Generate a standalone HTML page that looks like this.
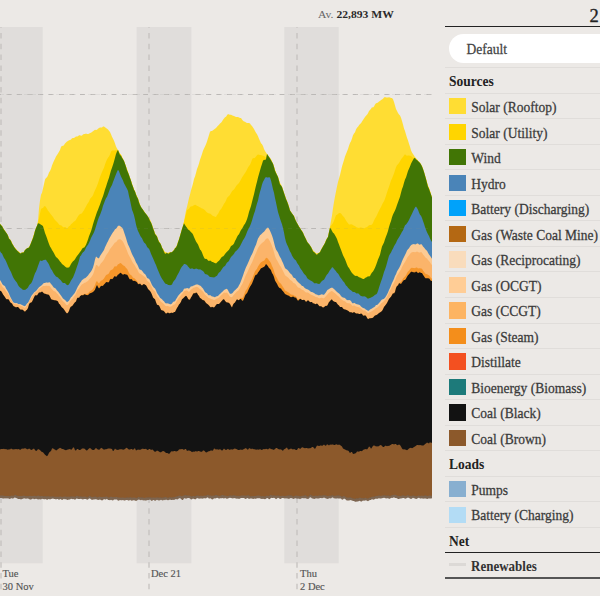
<!DOCTYPE html>
<html><head><meta charset="utf-8">
<style>
html,body{margin:0;padding:0;width:600px;height:596px;overflow:hidden;background:#ECE9E6;font-family:"Liberation Serif",serif;color:#333;}
#chart{position:absolute;left:0;top:0;width:600px;height:596px}
.xl{position:absolute;font-size:10.5px;color:#555;line-height:13.5px;white-space:nowrap;-webkit-text-stroke:0.15px #555}
#av{position:absolute;left:318px;top:8px;font-size:10px;line-height:14px;transform:scaleX(1.16);transform-origin:0 0;color:#666;white-space:nowrap}
#av b{color:#2a2a2a}
#two{position:absolute;left:589.5px;top:5px;font-size:18.5px;-webkit-text-stroke:0.3px #222;line-height:22px;color:#222}
#topline{position:absolute;left:445px;top:26px;width:155px;height:1.3px;background:#222}
#pill{position:absolute;left:449px;top:33.8px;width:170px;height:29px;border-radius:15px;background:#fff;}
#pill span{position:absolute;left:17.5px;top:7px;transform:scaleY(1.12);transform-origin:0 13.3px;font-size:13.5px;line-height:18px;color:#444;-webkit-text-stroke:0.25px #444}
.sep{position:absolute;left:445px;width:155px;height:1px;background:#E0DDDA}
.sw{position:absolute;left:449px;width:16.8px;height:16.2px}
.lt{position:absolute;left:471.3px;margin-top:6.2px;transform:scaleY(1.12);transform-origin:0 13.3px;font-size:13.5px;line-height:18px;color:#3a3a3a;white-space:nowrap;-webkit-text-stroke:0.25px #3a3a3a}
.lh{position:absolute;left:449px;margin-top:6.1px;transform:scaleY(1.12);transform-origin:0 13.3px;font-size:13.5px;line-height:18px;font-weight:bold;color:#222;white-space:nowrap}
</style></head><body>
<svg id="chart" width="600" height="596" viewBox="0 0 600 596">
<rect x="0" y="27" width="42.7" height="536.3" fill="#E0DDDB"/>
<rect x="136.6" y="27" width="54.8" height="536.3" fill="#E0DDDB"/>
<rect x="284.3" y="27" width="54.4" height="536.3" fill="#E0DDDB"/>
<g stroke="#C2BFBC" stroke-width="1.2" stroke-dasharray="5.5 5.3" stroke-dashoffset="4.8" fill="none">
<line x1="1" y1="27" x2="1" y2="590"/>
<line x1="149" y1="27" x2="149" y2="590"/>
<line x1="297" y1="27" x2="297" y2="590"/>
</g>
<g stroke="#C2BFBC" stroke-width="1.2" stroke-dasharray="5 5.5" stroke-dashoffset="4" fill="none">
<line x1="0" y1="94.5" x2="432" y2="94.5"/>
<line x1="0" y1="228.5" x2="432" y2="228.5"/>
</g>
<polygon fill="#FFDD33" points="0,223.5 1,225.0 2,226.1 3,227.9 4,229.3 5,230.8 6,232.6 7,233.7 8,235.6 9,237.9 10,239.2 11,240.8 12,243.0 13,244.8 14,246.4 15,247.7 16,248.9 17,250.4 18,251.3 19,251.7 20,253.1 21,253.5 22,252.3 23,252.2 24,251.7 25,250.0 26,249.3 27,248.2 28,247.8 29,247.5 30,245.2 31,243.0 32,240.0 33,237.2 34,234.2 35,230.8 36,228.1 37,225.7 38,220.8 39,208.6 40,200.6 41,194.8 42,192.7 43,188.6 44,183.9 45,179.6 46,178.1 47,177.3 48,175.3 49,172.4 50,170.9 51,168.7 52,165.6 53,163.1 54,160.8 55,158.8 56,156.5 57,154.9 58,153.5 59,151.8 60,149.9 61,147.1 62,145.7 63,145.9 64,145.1 65,143.5 66,142.4 67,141.6 68,141.0 69,140.2 70,139.9 71,139.4 72,138.2 73,137.9 74,137.9 75,137.2 76,136.5 77,136.6 78,136.2 79,135.2 80,135.2 81,135.7 82,135.4 83,134.6 84,134.1 85,133.9 86,133.6 87,133.9 88,134.1 89,133.7 90,133.1 91,132.7 92,132.0 93,131.2 94,130.4 95,129.8 96,130.1 97,129.8 98,128.7 99,128.0 100,127.5 101,127.4 102,127.5 103,126.6 104,126.6 105,127.3 106,128.1 107,128.8 108,129.4 109,130.8 110,132.1 111,134.3 112,136.7 113,138.8 114,140.8 115,143.4 116,146.4 117,148.6 118,150.1 119,152.0 120,153.8 121,154.8 122,156.9 123,158.9 124,161.0 125,163.7 126,166.5 127,169.0 128,172.1 129,175.1 130,177.7 131,180.5 132,183.4 133,186.4 134,189.2 135,191.1 136,193.9 137,196.5 138,198.4 139,201.5 140,204.4 141,206.9 142,208.6 143,209.7 144,210.9 145,212.4 146,213.9 147,215.2 148,216.7 149,218.0 150,219.5 151,222.0 152,224.4 153,227.7 154,230.6 155,233.3 156,234.5 157,236.3 158,239.2 159,241.3 160,242.8 161,244.7 162,247.6 163,249.1 164,250.7 165,252.1 166,252.3 167,252.7 168,253.2 169,252.5 170,252.3 171,252.3 172,252.2 173,251.1 174,249.5 175,247.9 176,247.1 177,244.9 178,241.8 179,239.1 180,235.9 181,232.4 182,229.1 183,225.9 184,221.8 185,215.9 186,210.6 187,206.7 188,202.4 189,197.9 190,194.4 191,190.3 192,187.0 193,183.5 194,179.1 195,176.4 196,173.0 197,169.1 198,166.6 199,163.5 200,159.7 201,157.0 202,154.1 203,150.7 204,148.5 205,146.6 206,144.3 207,141.5 208,138.3 209,135.0 210,131.8 211,131.1 212,130.9 213,130.3 214,129.6 215,128.8 216,127.9 217,126.8 218,125.8 219,124.7 220,123.6 221,122.8 222,121.5 223,119.8 224,118.4 225,117.3 226,116.7 227,115.3 228,114.0 229,114.6 230,114.8 231,114.7 232,115.3 233,115.8 234,115.9 235,116.5 236,117.1 237,117.1 238,117.0 239,117.5 240,118.1 241,118.1 242,119.4 243,120.7 244,121.4 245,121.8 246,122.4 247,123.0 248,123.0 249,123.1 250,123.5 251,124.9 252,126.1 253,127.6 254,129.0 255,130.9 256,132.8 257,134.2 258,136.3 259,138.8 260,141.1 261,143.2 262,144.2 263,146.1 264,149.1 265,151.0 266,152.4 267,154.0 268,155.3 269,156.6 270,158.0 271,159.5 272,161.4 273,163.6 274,166.5 275,169.9 276,172.4 277,174.8 278,177.0 279,179.9 280,182.9 281,184.5 282,186.7 283,189.7 284,193.0 285,195.8 286,198.6 287,201.2 288,203.5 289,207.0 290,210.4 291,211.8 292,213.5 293,214.7 294,216.0 295,218.6 296,221.2 297,222.9 298,224.8 299,226.6 300,228.0 301,229.7 302,230.7 303,232.6 304,235.3 305,237.2 306,238.9 307,241.3 308,243.0 309,243.9 310,245.4 311,246.8 312,248.8 313,250.6 314,251.3 315,252.0 316,253.4 317,253.6 318,252.8 319,252.9 320,251.7 321,250.1 322,248.0 323,246.0 324,244.8 325,243.0 326,240.1 327,238.3 328,236.9 329,231.6 330,226.3 331,221.0 332,215.4 333,208.3 334,202.1 335,196.5 336,191.5 337,186.5 338,182.1 339,178.5 340,175.1 341,170.8 342,166.4 343,163.2 344,159.9 345,156.6 346,153.9 347,151.5 348,149.0 349,145.7 350,143.1 351,141.2 352,138.4 353,135.2 354,133.4 355,132.2 356,129.6 357,127.7 358,126.8 359,125.2 360,124.1 361,123.3 362,121.6 363,120.0 364,118.6 365,117.0 366,115.8 367,114.8 368,113.3 369,111.1 370,110.0 371,108.8 372,107.3 373,107.4 374,106.4 375,104.6 376,103.3 377,103.1 378,102.6 379,101.5 380,100.9 381,100.1 382,99.4 383,98.8 384,97.6 385,97.0 386,97.5 387,97.6 388,97.4 389,97.3 390,97.5 391,98.0 392,97.9 393,99.2 394,102.0 395,105.4 396,108.9 397,111.0 398,112.9 399,114.6 400,115.6 401,117.8 402,120.9 403,124.4 404,128.4 405,131.1 406,134.5 407,137.7 408,140.6 409,143.7 410,146.7 411,150.2 412,152.6 413,154.1 414,155.4 415,157.2 416,158.3 417,159.2 418,160.9 419,161.6 420,162.6 421,164.4 422,166.1 423,169.0 424,172.0 425,175.4 426,178.7 427,182.1 428,185.4 429,188.1 430,191.0 431,194.2 432,197.2 432,496.1 431,496.2 430,496.1 429,496.0 428,496.4 427,496.5 426,496.1 425,495.8 424,496.2 423,496.5 422,496.0 421,496.3 420,496.4 419,495.9 418,496.1 417,496.7 416,496.7 415,496.6 414,496.2 413,495.8 412,496.4 411,496.3 410,496.6 409,496.2 408,495.3 407,496.1 406,496.6 405,496.4 404,496.0 403,495.7 402,496.0 401,496.6 400,496.4 399,496.3 398,496.5 397,496.1 396,495.5 395,495.2 394,495.3 393,495.6 392,495.8 391,496.0 390,496.7 389,496.3 388,495.8 387,496.2 386,496.3 385,495.8 384,495.8 383,496.1 382,496.0 381,496.4 380,496.3 379,495.8 378,496.2 377,496.5 376,496.6 375,496.8 374,497.2 373,497.2 372,497.2 371,497.7 370,498.0 369,498.5 368,499.0 367,498.9 366,498.3 365,498.3 364,499.0 363,498.5 362,498.7 361,498.5 360,497.9 359,498.5 358,499.0 357,498.7 356,498.8 355,499.5 354,499.1 353,498.7 352,498.7 351,498.0 350,497.8 349,498.0 348,498.2 347,498.1 346,497.8 345,497.1 344,496.2 343,496.8 342,497.4 341,496.6 340,496.2 339,496.1 338,495.8 337,496.0 336,496.2 335,496.3 334,496.4 333,495.7 332,495.7 331,496.2 330,496.2 329,496.3 328,496.5 327,496.5 326,496.0 325,495.8 324,495.7 323,495.7 322,496.1 321,496.2 320,495.8 319,495.9 318,496.3 317,496.4 316,496.1 315,496.3 314,496.4 313,496.2 312,496.2 311,495.2 310,495.2 309,496.4 308,497.0 307,496.9 306,496.0 305,495.6 304,496.2 303,496.3 302,496.2 301,496.7 300,496.8 299,496.4 298,496.3 297,496.3 296,496.1 295,496.2 294,496.8 293,497.0 292,496.3 291,495.8 290,496.0 289,495.8 288,495.9 287,496.2 286,496.3 285,496.7 284,496.4 283,496.2 282,496.2 281,496.5 280,496.6 279,496.3 278,495.8 277,496.1 276,496.5 275,496.1 274,495.7 273,496.1 272,496.0 271,495.2 270,495.4 269,496.4 268,496.5 267,496.0 266,496.6 265,497.1 264,496.9 263,496.5 262,496.7 261,496.7 260,496.2 259,496.1 258,495.9 257,495.9 256,496.5 255,496.6 254,496.6 253,496.8 252,496.6 251,496.7 250,496.7 249,496.0 248,495.6 247,496.1 246,496.3 245,496.0 244,495.9 243,496.1 242,496.0 241,496.0 240,496.5 239,496.5 238,496.2 237,496.5 236,496.2 235,496.0 234,495.7 233,495.7 232,496.2 231,495.9 230,495.8 229,496.2 228,496.4 227,496.6 226,496.2 225,496.0 224,495.9 223,495.5 222,495.6 221,496.0 220,496.4 219,496.5 218,495.9 217,495.7 216,495.5 215,495.7 214,496.2 213,496.1 212,496.4 211,496.0 210,495.9 209,496.0 208,495.2 207,495.5 206,496.3 205,496.2 204,496.0 203,496.4 202,496.4 201,496.0 200,496.6 199,496.6 198,496.0 197,495.8 196,496.4 195,497.0 194,496.6 193,496.6 192,497.1 191,496.8 190,496.3 189,496.0 188,495.9 187,496.0 186,495.8 185,495.6 184,496.1 183,496.2 182,496.7 181,496.6 180,496.0 179,496.3 178,496.6 177,496.9 176,497.0 175,497.5 174,497.8 173,497.8 172,498.1 171,498.0 170,497.7 169,497.8 168,498.4 167,498.0 166,497.5 165,497.7 164,497.7 163,498.1 162,498.4 161,497.7 160,498.1 159,498.3 158,497.8 157,497.9 156,498.0 155,498.2 154,498.1 153,498.0 152,498.2 151,497.9 150,497.7 149,497.9 148,497.8 147,498.0 146,498.1 145,498.2 144,498.4 143,498.0 142,497.8 141,498.1 140,498.0 139,497.5 138,497.6 137,498.4 136,498.6 135,498.1 134,497.9 133,498.0 132,498.3 131,497.9 130,497.6 129,498.2 128,498.1 127,497.8 126,498.2 125,498.3 124,498.2 123,498.1 122,497.9 121,498.3 120,498.1 119,498.0 118,498.1 117,497.5 116,497.6 115,497.7 114,497.5 113,497.8 112,497.6 111,497.0 110,497.5 109,498.0 108,497.9 107,497.0 106,496.9 105,497.4 104,497.3 103,497.6 102,497.6 101,497.6 100,497.3 99,497.1 98,497.7 97,497.7 96,497.2 95,496.8 94,497.3 93,497.5 92,497.5 91,497.2 90,496.3 89,496.5 88,497.4 87,497.9 86,497.2 85,497.0 84,497.1 83,497.2 82,497.2 81,496.8 80,497.1 79,497.1 78,496.7 77,496.2 76,496.6 75,497.5 74,497.1 73,496.9 72,497.0 71,496.7 70,497.3 69,497.2 68,497.1 67,497.5 66,496.9 65,497.0 64,497.0 63,497.3 62,497.4 61,497.0 60,497.1 59,497.2 58,497.3 57,497.2 56,497.2 55,497.3 54,497.3 53,496.8 52,496.9 51,497.0 50,497.0 49,496.9 48,496.6 47,497.0 46,496.9 45,496.6 44,497.0 43,496.8 42,496.4 41,496.6 40,496.7 39,496.3 38,496.1 37,496.6 36,496.8 35,496.3 34,496.3 33,496.5 32,496.6 31,496.6 30,496.3 29,496.5 28,496.7 27,496.6 26,496.7 25,496.6 24,496.1 23,496.3 22,496.4 21,496.4 20,496.4 19,496.6 18,496.5 17,496.3 16,495.7 15,495.2 14,495.9 13,496.4 12,495.9 11,496.2 10,496.8 9,496.4 8,496.4 7,496.4 6,496.4 5,496.5 4,496.3 3,496.1 2,496.1 1,496.0 0,496.0"/>
<polygon fill="#FFD500" points="0,223.7 1,225.3 2,226.1 3,227.9 4,229.6 5,231.0 6,232.6 7,233.7 8,235.7 9,238.8 10,239.6 11,240.8 12,243.0 13,244.9 14,246.7 15,248.1 16,248.9 17,250.4 18,251.3 19,251.7 20,253.1 21,253.5 22,252.3 23,253.0 24,251.7 25,250.0 26,249.3 27,248.3 28,247.8 29,247.5 30,245.2 31,243.0 32,240.6 33,237.6 34,234.2 35,230.8 36,228.1 37,225.8 38,222.8 39,218.8 40,213.4 41,209.1 42,208.3 43,208.0 44,206.4 45,205.9 46,207.3 47,208.8 48,210.7 49,211.7 50,213.2 51,214.6 52,215.7 53,217.1 54,218.8 55,219.9 56,220.9 57,221.9 58,223.0 59,224.5 60,225.2 61,225.2 62,226.0 63,227.2 64,227.3 65,227.0 66,227.5 67,228.7 68,227.5 69,226.2 70,225.7 71,224.3 72,223.6 73,222.4 74,221.4 75,221.0 76,219.8 77,218.0 78,216.3 79,215.0 80,213.9 81,213.7 82,213.2 83,211.5 84,210.3 85,208.3 86,206.6 87,204.5 88,203.1 89,201.6 90,199.1 91,197.8 92,196.7 93,195.2 94,192.6 95,190.2 96,188.3 97,185.8 98,183.2 99,180.1 100,176.9 101,174.6 102,172.0 103,169.8 104,167.7 105,164.4 106,161.7 107,159.5 108,157.8 109,156.5 110,154.4 111,151.8 112,150.6 113,150.6 114,150.5 115,150.5 116,150.3 117,150.3 118,150.1 119,152.0 120,153.8 121,154.8 122,156.9 123,159.3 124,161.0 125,163.7 126,166.5 127,169.4 128,172.2 129,175.1 130,177.7 131,180.8 132,184.3 133,186.8 134,189.6 135,191.6 136,194.4 137,196.6 138,198.6 139,201.7 140,204.8 141,207.1 142,208.6 143,209.7 144,211.5 145,212.8 146,213.9 147,215.2 148,216.7 149,218.4 150,220.4 151,222.6 152,224.9 153,227.7 154,230.8 155,234.1 156,235.2 157,236.5 158,239.5 159,241.6 160,242.9 161,244.7 162,247.6 163,249.1 164,251.0 165,252.7 166,252.8 167,252.7 168,253.2 169,252.5 170,252.3 171,252.3 172,252.2 173,251.1 174,250.3 175,248.2 176,247.5 177,245.5 178,242.2 179,239.4 180,236.1 181,232.4 182,229.1 183,226.0 184,221.8 185,218.0 186,214.1 187,210.2 188,209.5 189,208.8 190,207.3 191,206.3 192,206.5 193,205.8 194,205.3 195,204.8 196,205.1 197,205.9 198,206.0 199,206.9 200,207.3 201,207.9 202,208.4 203,208.8 204,209.4 205,210.2 206,211.6 207,212.4 208,213.1 209,213.4 210,213.5 211,214.3 212,215.2 213,215.9 214,216.2 215,216.7 216,216.9 217,215.1 218,213.9 219,212.1 220,210.1 221,209.2 222,207.5 223,205.7 224,203.8 225,202.6 226,200.5 227,197.9 228,196.7 229,195.9 230,194.7 231,192.9 232,191.2 233,190.2 234,189.4 235,187.9 236,186.2 237,184.9 238,184.1 239,182.9 240,181.3 241,179.6 242,177.4 243,175.9 244,174.5 245,172.9 246,171.6 247,169.6 248,167.4 249,166.1 250,164.7 251,162.4 252,159.6 253,158.1 254,158.3 255,157.8 256,156.6 257,155.2 258,154.4 259,154.8 260,155.0 261,155.0 262,155.4 263,155.8 264,156.0 265,156.7 266,158.1 267,154.0 268,155.4 269,157.1 270,158.0 271,159.5 272,161.9 273,163.7 274,166.8 275,170.3 276,172.8 277,175.0 278,177.0 279,180.0 280,183.9 281,185.4 282,187.1 283,189.9 284,193.0 285,195.8 286,199.0 287,201.2 288,203.5 289,207.0 290,210.4 291,212.1 292,213.5 293,214.7 294,216.3 295,218.9 296,221.2 297,222.9 298,224.8 299,226.6 300,228.0 301,229.8 302,231.3 303,232.7 304,235.3 305,237.3 306,239.2 307,241.4 308,243.0 309,243.9 310,245.4 311,246.8 312,248.8 313,250.6 314,252.0 315,252.5 316,253.4 317,253.9 318,253.5 319,252.9 320,251.7 321,250.1 322,248.2 323,246.4 324,244.8 325,243.0 326,240.5 327,238.6 328,236.9 329,231.9 330,227.5 331,225.8 332,224.5 333,223.1 334,220.8 335,217.9 336,215.3 337,214.7 338,214.0 339,213.0 340,212.9 341,213.5 342,214.7 343,216.3 344,217.0 345,218.7 346,220.6 347,222.1 348,223.2 349,224.6 350,224.5 351,224.3 352,224.4 353,225.1 354,225.8 355,226.1 356,227.1 357,227.4 358,227.7 359,227.9 360,227.6 361,227.6 362,227.7 363,228.1 364,228.4 365,227.7 366,227.5 367,227.1 368,226.3 369,225.3 370,225.1 371,225.1 372,224.5 373,222.9 374,220.6 375,218.6 376,216.9 377,215.0 378,212.8 379,210.7 380,208.8 381,207.0 382,204.7 383,202.8 384,201.3 385,198.8 386,195.7 387,192.5 388,189.4 389,186.8 390,183.7 391,180.6 392,178.5 393,176.1 394,173.6 395,170.3 396,167.2 397,165.2 398,164.2 399,162.9 400,161.3 401,159.6 402,158.1 403,157.1 404,155.4 405,154.3 406,155.3 407,155.7 408,155.4 409,155.6 410,155.8 411,155.9 412,156.8 413,157.8 414,157.9 415,157.2 416,159.1 417,159.6 418,160.9 419,162.1 420,162.9 421,164.4 422,166.2 423,169.0 424,172.0 425,175.5 426,178.9 427,183.1 428,186.2 429,188.2 430,191.0 431,194.4 432,197.6 432,496.1 431,496.2 430,496.1 429,496.0 428,496.4 427,496.5 426,496.1 425,495.8 424,496.2 423,496.5 422,496.0 421,496.3 420,496.4 419,495.9 418,496.1 417,496.7 416,496.7 415,496.6 414,496.2 413,495.8 412,496.4 411,496.3 410,496.6 409,496.2 408,495.3 407,496.1 406,496.6 405,496.4 404,496.0 403,495.7 402,496.0 401,496.6 400,496.4 399,496.3 398,496.5 397,496.1 396,495.5 395,495.2 394,495.3 393,495.6 392,495.8 391,496.0 390,496.7 389,496.3 388,495.8 387,496.2 386,496.3 385,495.8 384,495.8 383,496.1 382,496.0 381,496.4 380,496.3 379,495.8 378,496.2 377,496.5 376,496.6 375,496.8 374,497.2 373,497.2 372,497.2 371,497.7 370,498.0 369,498.5 368,499.0 367,498.9 366,498.3 365,498.3 364,499.0 363,498.5 362,498.7 361,498.5 360,497.9 359,498.5 358,499.0 357,498.7 356,498.8 355,499.5 354,499.1 353,498.7 352,498.7 351,498.0 350,497.8 349,498.0 348,498.2 347,498.1 346,497.8 345,497.1 344,496.2 343,496.8 342,497.4 341,496.6 340,496.2 339,496.1 338,495.8 337,496.0 336,496.2 335,496.3 334,496.4 333,495.7 332,495.7 331,496.2 330,496.2 329,496.3 328,496.5 327,496.5 326,496.0 325,495.8 324,495.7 323,495.7 322,496.1 321,496.2 320,495.8 319,495.9 318,496.3 317,496.4 316,496.1 315,496.3 314,496.4 313,496.2 312,496.2 311,495.2 310,495.2 309,496.4 308,497.0 307,496.9 306,496.0 305,495.6 304,496.2 303,496.3 302,496.2 301,496.7 300,496.8 299,496.4 298,496.3 297,496.3 296,496.1 295,496.2 294,496.8 293,497.0 292,496.3 291,495.8 290,496.0 289,495.8 288,495.9 287,496.2 286,496.3 285,496.7 284,496.4 283,496.2 282,496.2 281,496.5 280,496.6 279,496.3 278,495.8 277,496.1 276,496.5 275,496.1 274,495.7 273,496.1 272,496.0 271,495.2 270,495.4 269,496.4 268,496.5 267,496.0 266,496.6 265,497.1 264,496.9 263,496.5 262,496.7 261,496.7 260,496.2 259,496.1 258,495.9 257,495.9 256,496.5 255,496.6 254,496.6 253,496.8 252,496.6 251,496.7 250,496.7 249,496.0 248,495.6 247,496.1 246,496.3 245,496.0 244,495.9 243,496.1 242,496.0 241,496.0 240,496.5 239,496.5 238,496.2 237,496.5 236,496.2 235,496.0 234,495.7 233,495.7 232,496.2 231,495.9 230,495.8 229,496.2 228,496.4 227,496.6 226,496.2 225,496.0 224,495.9 223,495.5 222,495.6 221,496.0 220,496.4 219,496.5 218,495.9 217,495.7 216,495.5 215,495.7 214,496.2 213,496.1 212,496.4 211,496.0 210,495.9 209,496.0 208,495.2 207,495.5 206,496.3 205,496.2 204,496.0 203,496.4 202,496.4 201,496.0 200,496.6 199,496.6 198,496.0 197,495.8 196,496.4 195,497.0 194,496.6 193,496.6 192,497.1 191,496.8 190,496.3 189,496.0 188,495.9 187,496.0 186,495.8 185,495.6 184,496.1 183,496.2 182,496.7 181,496.6 180,496.0 179,496.3 178,496.6 177,496.9 176,497.0 175,497.5 174,497.8 173,497.8 172,498.1 171,498.0 170,497.7 169,497.8 168,498.4 167,498.0 166,497.5 165,497.7 164,497.7 163,498.1 162,498.4 161,497.7 160,498.1 159,498.3 158,497.8 157,497.9 156,498.0 155,498.2 154,498.1 153,498.0 152,498.2 151,497.9 150,497.7 149,497.9 148,497.8 147,498.0 146,498.1 145,498.2 144,498.4 143,498.0 142,497.8 141,498.1 140,498.0 139,497.5 138,497.6 137,498.4 136,498.6 135,498.1 134,497.9 133,498.0 132,498.3 131,497.9 130,497.6 129,498.2 128,498.1 127,497.8 126,498.2 125,498.3 124,498.2 123,498.1 122,497.9 121,498.3 120,498.1 119,498.0 118,498.1 117,497.5 116,497.6 115,497.7 114,497.5 113,497.8 112,497.6 111,497.0 110,497.5 109,498.0 108,497.9 107,497.0 106,496.9 105,497.4 104,497.3 103,497.6 102,497.6 101,497.6 100,497.3 99,497.1 98,497.7 97,497.7 96,497.2 95,496.8 94,497.3 93,497.5 92,497.5 91,497.2 90,496.3 89,496.5 88,497.4 87,497.9 86,497.2 85,497.0 84,497.1 83,497.2 82,497.2 81,496.8 80,497.1 79,497.1 78,496.7 77,496.2 76,496.6 75,497.5 74,497.1 73,496.9 72,497.0 71,496.7 70,497.3 69,497.2 68,497.1 67,497.5 66,496.9 65,497.0 64,497.0 63,497.3 62,497.4 61,497.0 60,497.1 59,497.2 58,497.3 57,497.2 56,497.2 55,497.3 54,497.3 53,496.8 52,496.9 51,497.0 50,497.0 49,496.9 48,496.6 47,497.0 46,496.9 45,496.6 44,497.0 43,496.8 42,496.4 41,496.6 40,496.7 39,496.3 38,496.1 37,496.6 36,496.8 35,496.3 34,496.3 33,496.5 32,496.6 31,496.6 30,496.3 29,496.5 28,496.7 27,496.6 26,496.7 25,496.6 24,496.1 23,496.3 22,496.4 21,496.4 20,496.4 19,496.6 18,496.5 17,496.3 16,495.7 15,495.2 14,495.9 13,496.4 12,495.9 11,496.2 10,496.8 9,496.4 8,496.4 7,496.4 6,496.4 5,496.5 4,496.3 3,496.1 2,496.1 1,496.0 0,496.0"/>
<polygon fill="#417505" points="0,223.7 1,225.3 2,226.1 3,227.9 4,229.7 5,231.0 6,232.6 7,233.7 8,235.7 9,238.8 10,239.6 11,241.0 12,243.5 13,244.9 14,246.7 15,248.3 16,249.4 17,250.6 18,251.6 19,252.4 20,253.3 21,253.5 22,252.3 23,253.0 24,251.7 25,250.0 26,249.3 27,248.3 28,247.9 29,247.5 30,245.4 31,243.0 32,240.6 33,238.0 34,234.8 35,230.8 36,228.1 37,225.8 38,223.2 39,223.5 40,224.1 41,224.8 42,225.2 43,226.3 44,229.6 45,232.9 46,235.4 47,238.3 48,241.2 49,243.9 50,246.6 51,248.0 52,249.9 53,251.5 54,253.2 55,255.3 56,257.0 57,257.8 58,258.7 59,260.1 60,261.5 61,262.6 62,263.9 63,264.8 64,265.5 65,266.4 66,267.2 67,267.7 68,267.6 69,267.5 70,266.0 71,264.0 72,262.6 73,261.3 74,260.4 75,259.2 76,257.6 77,256.1 78,254.7 79,253.4 80,252.1 81,250.7 82,248.9 83,247.8 84,247.8 85,246.5 86,244.7 87,242.2 88,239.6 89,236.2 90,233.8 91,231.2 92,227.9 93,224.3 94,221.0 95,218.0 96,214.9 97,212.1 98,209.8 99,207.0 100,204.4 101,201.5 102,198.7 103,196.3 104,193.0 105,189.6 106,186.7 107,183.5 108,180.6 109,177.8 110,174.0 111,170.6 112,167.8 113,164.8 114,161.4 115,157.7 116,153.9 117,151.5 118,150.1 119,152.8 120,154.9 121,155.7 122,157.7 123,159.3 124,161.0 125,163.7 126,166.7 127,170.2 128,172.6 129,175.1 130,177.9 131,180.8 132,184.3 133,186.8 134,189.7 135,191.6 136,194.5 137,197.0 138,198.8 139,202.4 140,205.1 141,207.1 142,208.6 143,209.7 144,211.5 145,212.8 146,214.0 147,215.2 148,216.7 149,218.4 150,221.0 151,222.6 152,224.9 153,228.3 154,230.8 155,234.1 156,235.2 157,236.5 158,239.5 159,241.9 160,243.0 161,244.7 162,247.8 163,249.5 164,251.8 165,253.8 166,253.4 167,252.7 168,253.8 169,253.4 170,252.6 171,252.3 172,252.2 173,251.1 174,250.3 175,248.2 176,247.5 177,245.5 178,242.2 179,239.4 180,236.1 181,232.4 182,229.1 183,226.0 184,223.3 185,225.1 186,226.5 187,227.8 188,229.5 189,230.1 190,230.9 191,232.3 192,233.1 193,234.6 194,236.9 195,239.2 196,241.5 197,242.9 198,244.5 199,246.9 200,249.4 201,250.6 202,252.6 203,255.3 204,257.4 205,258.9 206,258.7 207,259.3 208,260.4 209,260.9 210,260.4 211,261.1 212,261.9 213,262.0 214,262.7 215,263.0 216,263.6 217,262.6 218,261.6 219,260.7 220,259.6 221,258.0 222,256.8 223,256.4 224,255.5 225,254.0 226,252.7 227,251.7 228,250.7 229,249.7 230,247.9 231,246.1 232,245.4 233,244.7 234,243.4 235,241.0 236,239.2 237,237.0 238,235.2 239,234.2 240,232.0 241,230.1 242,228.7 243,227.0 244,225.1 245,223.7 246,221.7 247,219.3 248,215.9 249,212.1 250,208.9 251,206.1 252,201.9 253,197.9 254,194.3 255,189.7 256,185.4 257,181.7 258,177.5 259,173.9 260,170.6 261,167.0 262,164.0 263,160.8 264,159.8 265,159.9 266,159.2 267,154.0 268,155.4 269,157.1 270,158.5 271,160.2 272,162.1 273,163.7 274,167.1 275,170.7 276,173.1 277,175.0 278,177.1 279,180.7 280,184.4 281,185.4 282,187.1 283,189.9 284,193.1 285,195.9 286,199.0 287,201.2 288,204.0 289,207.0 290,210.4 291,212.1 292,213.5 293,214.7 294,216.3 295,219.1 296,221.2 297,222.9 298,224.8 299,226.7 300,228.1 301,229.8 302,231.3 303,232.7 304,235.3 305,237.3 306,239.2 307,241.4 308,243.0 309,243.9 310,245.5 311,246.9 312,248.9 313,251.3 314,252.2 315,252.7 316,254.2 317,254.8 318,253.5 319,252.9 320,252.2 321,250.1 322,248.2 323,246.4 324,244.8 325,243.1 326,240.5 327,238.6 328,236.9 329,231.9 330,227.7 331,228.9 332,231.0 333,232.8 334,233.6 335,235.2 336,237.0 337,239.0 338,241.9 339,244.6 340,247.3 341,249.8 342,252.5 343,255.3 344,257.3 345,259.2 346,261.7 347,264.4 348,266.7 349,268.1 350,269.8 351,271.6 352,273.0 353,273.9 354,274.9 355,275.7 356,275.9 357,275.7 358,276.5 359,277.2 360,277.6 361,278.0 362,278.4 363,278.9 364,278.9 365,278.1 366,277.6 367,277.1 368,276.3 369,276.5 370,276.1 371,273.9 372,272.5 373,271.5 374,269.7 375,267.8 376,265.2 377,262.4 378,259.4 379,257.2 380,254.7 381,250.5 382,246.5 383,244.6 384,242.5 385,239.2 386,236.4 387,234.0 388,231.0 389,227.1 390,223.8 391,220.9 392,217.2 393,214.5 394,212.5 395,210.6 396,207.9 397,205.0 398,202.2 399,199.5 400,196.7 401,192.8 402,189.0 403,186.4 404,182.7 405,179.5 406,177.4 407,174.2 408,171.0 409,168.7 410,166.4 411,163.8 412,161.7 413,160.0 414,158.2 415,157.9 416,159.5 417,159.9 418,160.9 419,162.1 420,162.9 421,164.4 422,166.4 423,169.0 424,172.0 425,175.5 426,178.9 427,183.1 428,186.7 429,188.7 430,191.8 431,194.5 432,197.6 432,496.1 431,496.2 430,496.1 429,496.0 428,496.4 427,496.5 426,496.1 425,495.8 424,496.2 423,496.5 422,496.0 421,496.3 420,496.4 419,495.9 418,496.1 417,496.7 416,496.7 415,496.6 414,496.2 413,495.8 412,496.4 411,496.3 410,496.6 409,496.2 408,495.3 407,496.1 406,496.6 405,496.4 404,496.0 403,495.7 402,496.0 401,496.6 400,496.4 399,496.3 398,496.5 397,496.1 396,495.5 395,495.2 394,495.3 393,495.6 392,495.8 391,496.0 390,496.7 389,496.3 388,495.8 387,496.2 386,496.3 385,495.8 384,495.8 383,496.1 382,496.0 381,496.4 380,496.3 379,495.8 378,496.2 377,496.5 376,496.6 375,496.8 374,497.2 373,497.2 372,497.2 371,497.7 370,498.0 369,498.5 368,499.0 367,498.9 366,498.3 365,498.3 364,499.0 363,498.5 362,498.7 361,498.5 360,497.9 359,498.5 358,499.0 357,498.7 356,498.8 355,499.5 354,499.1 353,498.7 352,498.7 351,498.0 350,497.8 349,498.0 348,498.2 347,498.1 346,497.8 345,497.1 344,496.2 343,496.8 342,497.4 341,496.6 340,496.2 339,496.1 338,495.8 337,496.0 336,496.2 335,496.3 334,496.4 333,495.7 332,495.7 331,496.2 330,496.2 329,496.3 328,496.5 327,496.5 326,496.0 325,495.8 324,495.7 323,495.7 322,496.1 321,496.2 320,495.8 319,495.9 318,496.3 317,496.4 316,496.1 315,496.3 314,496.4 313,496.2 312,496.2 311,495.2 310,495.2 309,496.4 308,497.0 307,496.9 306,496.0 305,495.6 304,496.2 303,496.3 302,496.2 301,496.7 300,496.8 299,496.4 298,496.3 297,496.3 296,496.1 295,496.2 294,496.8 293,497.0 292,496.3 291,495.8 290,496.0 289,495.8 288,495.9 287,496.2 286,496.3 285,496.7 284,496.4 283,496.2 282,496.2 281,496.5 280,496.6 279,496.3 278,495.8 277,496.1 276,496.5 275,496.1 274,495.7 273,496.1 272,496.0 271,495.2 270,495.4 269,496.4 268,496.5 267,496.0 266,496.6 265,497.1 264,496.9 263,496.5 262,496.7 261,496.7 260,496.2 259,496.1 258,495.9 257,495.9 256,496.5 255,496.6 254,496.6 253,496.8 252,496.6 251,496.7 250,496.7 249,496.0 248,495.6 247,496.1 246,496.3 245,496.0 244,495.9 243,496.1 242,496.0 241,496.0 240,496.5 239,496.5 238,496.2 237,496.5 236,496.2 235,496.0 234,495.7 233,495.7 232,496.2 231,495.9 230,495.8 229,496.2 228,496.4 227,496.6 226,496.2 225,496.0 224,495.9 223,495.5 222,495.6 221,496.0 220,496.4 219,496.5 218,495.9 217,495.7 216,495.5 215,495.7 214,496.2 213,496.1 212,496.4 211,496.0 210,495.9 209,496.0 208,495.2 207,495.5 206,496.3 205,496.2 204,496.0 203,496.4 202,496.4 201,496.0 200,496.6 199,496.6 198,496.0 197,495.8 196,496.4 195,497.0 194,496.6 193,496.6 192,497.1 191,496.8 190,496.3 189,496.0 188,495.9 187,496.0 186,495.8 185,495.6 184,496.1 183,496.2 182,496.7 181,496.6 180,496.0 179,496.3 178,496.6 177,496.9 176,497.0 175,497.5 174,497.8 173,497.8 172,498.1 171,498.0 170,497.7 169,497.8 168,498.4 167,498.0 166,497.5 165,497.7 164,497.7 163,498.1 162,498.4 161,497.7 160,498.1 159,498.3 158,497.8 157,497.9 156,498.0 155,498.2 154,498.1 153,498.0 152,498.2 151,497.9 150,497.7 149,497.9 148,497.8 147,498.0 146,498.1 145,498.2 144,498.4 143,498.0 142,497.8 141,498.1 140,498.0 139,497.5 138,497.6 137,498.4 136,498.6 135,498.1 134,497.9 133,498.0 132,498.3 131,497.9 130,497.6 129,498.2 128,498.1 127,497.8 126,498.2 125,498.3 124,498.2 123,498.1 122,497.9 121,498.3 120,498.1 119,498.0 118,498.1 117,497.5 116,497.6 115,497.7 114,497.5 113,497.8 112,497.6 111,497.0 110,497.5 109,498.0 108,497.9 107,497.0 106,496.9 105,497.4 104,497.3 103,497.6 102,497.6 101,497.6 100,497.3 99,497.1 98,497.7 97,497.7 96,497.2 95,496.8 94,497.3 93,497.5 92,497.5 91,497.2 90,496.3 89,496.5 88,497.4 87,497.9 86,497.2 85,497.0 84,497.1 83,497.2 82,497.2 81,496.8 80,497.1 79,497.1 78,496.7 77,496.2 76,496.6 75,497.5 74,497.1 73,496.9 72,497.0 71,496.7 70,497.3 69,497.2 68,497.1 67,497.5 66,496.9 65,497.0 64,497.0 63,497.3 62,497.4 61,497.0 60,497.1 59,497.2 58,497.3 57,497.2 56,497.2 55,497.3 54,497.3 53,496.8 52,496.9 51,497.0 50,497.0 49,496.9 48,496.6 47,497.0 46,496.9 45,496.6 44,497.0 43,496.8 42,496.4 41,496.6 40,496.7 39,496.3 38,496.1 37,496.6 36,496.8 35,496.3 34,496.3 33,496.5 32,496.6 31,496.6 30,496.3 29,496.5 28,496.7 27,496.6 26,496.7 25,496.6 24,496.1 23,496.3 22,496.4 21,496.4 20,496.4 19,496.6 18,496.5 17,496.3 16,495.7 15,495.2 14,495.9 13,496.4 12,495.9 11,496.2 10,496.8 9,496.4 8,496.4 7,496.4 6,496.4 5,496.5 4,496.3 3,496.1 2,496.1 1,496.0 0,496.0"/>
<polygon fill="#4A84B8" points="0,251.0 1,252.7 2,253.6 3,255.7 4,257.9 5,259.3 6,261.2 7,263.6 8,265.9 9,268.3 10,270.3 11,272.1 12,274.6 13,276.9 14,278.8 15,280.3 16,281.5 17,282.8 18,284.9 19,286.4 20,287.6 21,288.3 22,288.9 23,289.9 24,289.8 25,290.0 26,289.2 27,288.5 28,287.6 29,285.5 30,284.2 31,283.5 32,281.7 33,279.3 34,276.1 35,273.3 36,271.6 37,269.0 38,265.9 39,263.2 40,260.4 41,260.7 42,260.9 43,260.3 44,260.0 45,259.8 46,259.8 47,261.4 48,262.8 49,264.5 50,266.9 51,269.0 52,270.2 53,272.2 54,273.9 55,275.3 56,276.6 57,277.1 58,277.5 59,278.7 60,279.5 61,280.6 62,282.1 63,283.0 64,282.9 65,283.0 66,284.3 67,284.9 68,285.2 69,284.2 70,282.4 71,280.4 72,279.0 73,277.6 74,275.0 75,272.5 76,269.5 77,266.5 78,263.8 79,260.4 80,256.6 81,255.4 82,253.6 83,252.3 84,251.5 85,250.0 86,247.5 87,245.9 88,244.8 89,242.7 90,240.7 91,238.1 92,236.0 93,234.2 94,232.3 95,229.5 96,226.2 97,223.1 98,219.7 99,217.1 100,214.9 101,212.3 102,209.4 103,205.8 104,203.2 105,200.6 106,198.3 107,196.8 108,194.2 109,191.6 110,188.7 111,186.8 112,184.9 113,182.1 114,179.4 115,176.7 116,174.2 117,171.7 118,169.7 119,171.3 120,174.1 121,176.5 122,178.5 123,180.6 124,183.2 125,185.1 126,187.0 127,188.7 128,191.1 129,195.9 130,200.1 131,204.9 132,209.7 133,212.3 134,215.2 135,219.6 136,224.4 137,228.2 138,231.1 139,233.1 140,235.2 141,237.1 142,238.2 143,240.5 144,242.5 145,243.3 146,244.5 147,246.7 148,248.1 149,248.8 150,251.0 151,253.7 152,256.1 153,258.2 154,260.6 155,263.0 156,265.1 157,267.7 158,270.3 159,272.4 160,274.9 161,277.0 162,278.7 163,280.2 164,281.7 165,283.2 166,284.0 167,284.1 168,285.1 169,285.1 170,285.2 171,285.1 172,284.6 173,282.2 174,280.7 175,279.8 176,278.1 177,275.7 178,273.9 179,272.3 180,270.1 181,267.9 182,266.5 183,265.5 184,263.9 185,264.1 186,264.6 187,265.0 188,266.5 189,267.5 190,268.7 191,268.8 192,268.3 193,268.7 194,269.2 195,269.1 196,268.5 197,268.7 198,269.2 199,269.5 200,269.3 201,269.7 202,270.6 203,271.1 204,272.3 205,274.0 206,274.3 207,274.5 208,275.1 209,276.3 210,277.1 211,277.1 212,277.3 213,277.3 214,277.5 215,277.0 216,276.2 217,275.8 218,274.0 219,272.6 220,271.9 221,270.4 222,269.1 223,267.5 224,266.4 225,266.0 226,264.2 227,262.5 228,262.0 229,260.7 230,258.7 231,257.1 232,256.0 233,254.9 234,253.7 235,251.9 236,250.9 237,250.2 238,249.0 239,247.8 240,246.2 241,244.2 242,242.3 243,240.3 244,238.7 245,237.1 246,234.8 247,232.1 248,229.7 249,227.9 250,226.1 251,223.6 252,220.4 253,217.0 254,213.8 255,211.1 256,206.9 257,203.4 258,200.4 259,195.6 260,191.8 261,188.4 262,184.5 263,181.7 264,179.9 265,177.9 266,177.1 267,177.4 268,177.6 269,177.3 270,177.4 271,180.5 272,184.7 273,189.2 274,192.8 275,197.9 276,202.5 277,207.2 278,212.0 279,215.2 280,218.5 281,221.4 282,224.2 283,228.0 284,232.5 285,237.9 286,241.9 287,244.4 288,246.5 289,249.1 290,251.5 291,253.1 292,255.4 293,257.3 294,258.8 295,259.7 296,260.5 297,262.8 298,264.2 299,265.6 300,267.7 301,269.2 302,270.6 303,272.2 304,273.7 305,274.8 306,275.7 307,277.7 308,279.1 309,279.4 310,280.2 311,280.7 312,281.3 313,282.1 314,283.0 315,283.5 316,283.1 317,283.5 318,283.8 319,284.1 320,283.6 321,281.9 322,280.9 323,280.3 324,279.7 325,278.0 326,275.9 327,274.6 328,273.5 329,271.7 330,270.1 331,269.0 332,267.3 333,267.6 334,269.0 335,269.9 336,271.2 337,272.7 338,273.5 339,275.0 340,277.0 341,278.2 342,279.5 343,281.3 344,282.1 345,283.8 346,285.4 347,286.2 348,287.7 349,288.7 350,289.7 351,290.3 352,291.2 353,292.1 354,292.0 355,292.3 356,293.2 357,293.4 358,293.3 359,294.1 360,295.3 361,296.0 362,296.2 363,296.5 364,296.3 365,296.6 366,297.1 367,297.9 368,298.8 369,298.3 370,298.0 371,297.6 372,297.0 373,296.6 374,295.8 375,294.8 376,294.6 377,293.5 378,290.9 379,287.5 380,284.5 381,281.6 382,278.7 383,275.4 384,272.0 385,269.5 386,266.5 387,263.0 388,259.3 389,255.8 390,254.0 391,252.4 392,250.3 393,248.4 394,246.3 395,244.4 396,243.1 397,240.6 398,238.7 399,237.2 400,235.6 401,233.8 402,231.8 403,230.4 404,227.7 405,225.3 406,224.4 407,223.2 408,221.7 409,220.1 410,217.7 411,215.7 412,213.8 413,211.5 414,209.4 415,207.4 416,206.6 417,208.1 418,209.7 419,212.6 420,214.8 421,215.8 422,218.1 423,220.9 424,223.8 425,226.9 426,229.7 427,232.3 428,234.3 429,236.1 430,238.5 431,240.4 432,242.1 432,496.1 431,496.2 430,496.1 429,496.0 428,496.4 427,496.5 426,496.1 425,495.8 424,496.2 423,496.5 422,496.0 421,496.3 420,496.4 419,495.9 418,496.1 417,496.7 416,496.7 415,496.6 414,496.2 413,495.8 412,496.4 411,496.3 410,496.6 409,496.2 408,495.3 407,496.1 406,496.6 405,496.4 404,496.0 403,495.7 402,496.0 401,496.6 400,496.4 399,496.3 398,496.5 397,496.1 396,495.5 395,495.2 394,495.3 393,495.6 392,495.8 391,496.0 390,496.7 389,496.3 388,495.8 387,496.2 386,496.3 385,495.8 384,495.8 383,496.1 382,496.0 381,496.4 380,496.3 379,495.8 378,496.2 377,496.5 376,496.6 375,496.8 374,497.2 373,497.2 372,497.2 371,497.7 370,498.0 369,498.5 368,499.0 367,498.9 366,498.3 365,498.3 364,499.0 363,498.5 362,498.7 361,498.5 360,497.9 359,498.5 358,499.0 357,498.7 356,498.8 355,499.5 354,499.1 353,498.7 352,498.7 351,498.0 350,497.8 349,498.0 348,498.2 347,498.1 346,497.8 345,497.1 344,496.2 343,496.8 342,497.4 341,496.6 340,496.2 339,496.1 338,495.8 337,496.0 336,496.2 335,496.3 334,496.4 333,495.7 332,495.7 331,496.2 330,496.2 329,496.3 328,496.5 327,496.5 326,496.0 325,495.8 324,495.7 323,495.7 322,496.1 321,496.2 320,495.8 319,495.9 318,496.3 317,496.4 316,496.1 315,496.3 314,496.4 313,496.2 312,496.2 311,495.2 310,495.2 309,496.4 308,497.0 307,496.9 306,496.0 305,495.6 304,496.2 303,496.3 302,496.2 301,496.7 300,496.8 299,496.4 298,496.3 297,496.3 296,496.1 295,496.2 294,496.8 293,497.0 292,496.3 291,495.8 290,496.0 289,495.8 288,495.9 287,496.2 286,496.3 285,496.7 284,496.4 283,496.2 282,496.2 281,496.5 280,496.6 279,496.3 278,495.8 277,496.1 276,496.5 275,496.1 274,495.7 273,496.1 272,496.0 271,495.2 270,495.4 269,496.4 268,496.5 267,496.0 266,496.6 265,497.1 264,496.9 263,496.5 262,496.7 261,496.7 260,496.2 259,496.1 258,495.9 257,495.9 256,496.5 255,496.6 254,496.6 253,496.8 252,496.6 251,496.7 250,496.7 249,496.0 248,495.6 247,496.1 246,496.3 245,496.0 244,495.9 243,496.1 242,496.0 241,496.0 240,496.5 239,496.5 238,496.2 237,496.5 236,496.2 235,496.0 234,495.7 233,495.7 232,496.2 231,495.9 230,495.8 229,496.2 228,496.4 227,496.6 226,496.2 225,496.0 224,495.9 223,495.5 222,495.6 221,496.0 220,496.4 219,496.5 218,495.9 217,495.7 216,495.5 215,495.7 214,496.2 213,496.1 212,496.4 211,496.0 210,495.9 209,496.0 208,495.2 207,495.5 206,496.3 205,496.2 204,496.0 203,496.4 202,496.4 201,496.0 200,496.6 199,496.6 198,496.0 197,495.8 196,496.4 195,497.0 194,496.6 193,496.6 192,497.1 191,496.8 190,496.3 189,496.0 188,495.9 187,496.0 186,495.8 185,495.6 184,496.1 183,496.2 182,496.7 181,496.6 180,496.0 179,496.3 178,496.6 177,496.9 176,497.0 175,497.5 174,497.8 173,497.8 172,498.1 171,498.0 170,497.7 169,497.8 168,498.4 167,498.0 166,497.5 165,497.7 164,497.7 163,498.1 162,498.4 161,497.7 160,498.1 159,498.3 158,497.8 157,497.9 156,498.0 155,498.2 154,498.1 153,498.0 152,498.2 151,497.9 150,497.7 149,497.9 148,497.8 147,498.0 146,498.1 145,498.2 144,498.4 143,498.0 142,497.8 141,498.1 140,498.0 139,497.5 138,497.6 137,498.4 136,498.6 135,498.1 134,497.9 133,498.0 132,498.3 131,497.9 130,497.6 129,498.2 128,498.1 127,497.8 126,498.2 125,498.3 124,498.2 123,498.1 122,497.9 121,498.3 120,498.1 119,498.0 118,498.1 117,497.5 116,497.6 115,497.7 114,497.5 113,497.8 112,497.6 111,497.0 110,497.5 109,498.0 108,497.9 107,497.0 106,496.9 105,497.4 104,497.3 103,497.6 102,497.6 101,497.6 100,497.3 99,497.1 98,497.7 97,497.7 96,497.2 95,496.8 94,497.3 93,497.5 92,497.5 91,497.2 90,496.3 89,496.5 88,497.4 87,497.9 86,497.2 85,497.0 84,497.1 83,497.2 82,497.2 81,496.8 80,497.1 79,497.1 78,496.7 77,496.2 76,496.6 75,497.5 74,497.1 73,496.9 72,497.0 71,496.7 70,497.3 69,497.2 68,497.1 67,497.5 66,496.9 65,497.0 64,497.0 63,497.3 62,497.4 61,497.0 60,497.1 59,497.2 58,497.3 57,497.2 56,497.2 55,497.3 54,497.3 53,496.8 52,496.9 51,497.0 50,497.0 49,496.9 48,496.6 47,497.0 46,496.9 45,496.6 44,497.0 43,496.8 42,496.4 41,496.6 40,496.7 39,496.3 38,496.1 37,496.6 36,496.8 35,496.3 34,496.3 33,496.5 32,496.6 31,496.6 30,496.3 29,496.5 28,496.7 27,496.6 26,496.7 25,496.6 24,496.1 23,496.3 22,496.4 21,496.4 20,496.4 19,496.6 18,496.5 17,496.3 16,495.7 15,495.2 14,495.9 13,496.4 12,495.9 11,496.2 10,496.8 9,496.4 8,496.4 7,496.4 6,496.4 5,496.5 4,496.3 3,496.1 2,496.1 1,496.0 0,496.0"/>
<polygon fill="#FCCB94" points="0,280.0 1,281.4 2,283.4 3,285.0 4,285.4 5,286.3 6,288.4 7,289.9 8,291.8 9,293.8 10,296.3 11,298.2 12,300.0 13,301.9 14,302.7 15,303.1 16,303.3 17,303.0 18,303.9 19,304.3 20,304.1 21,304.6 22,305.0 23,305.4 24,305.9 25,306.3 26,304.9 27,303.5 28,302.7 29,301.0 30,298.9 31,296.8 32,295.1 33,293.9 34,292.5 35,291.7 36,290.9 37,289.7 38,288.6 39,287.3 40,286.6 41,285.8 42,284.9 43,283.7 44,283.1 45,283.1 46,282.4 47,282.4 48,282.8 49,282.2 50,282.5 51,283.9 52,285.1 53,286.5 54,287.8 55,287.9 56,289.0 57,290.6 58,291.5 59,292.8 60,294.2 61,295.6 62,297.1 63,298.4 64,299.2 65,299.9 66,301.1 67,302.2 68,301.5 69,300.8 70,298.9 71,297.2 72,296.4 73,295.1 74,294.0 75,292.6 76,290.4 77,288.2 78,286.3 79,284.7 80,283.0 81,281.7 82,280.1 83,279.4 84,278.6 85,278.2 86,277.4 87,276.4 88,275.4 89,273.9 90,272.7 91,271.6 92,269.7 93,267.6 94,264.1 95,259.6 96,256.4 97,257.3 98,258.3 99,258.2 100,256.1 101,254.6 102,253.1 103,251.5 104,249.9 105,247.3 106,245.2 107,243.1 108,241.2 109,239.0 110,237.3 111,235.6 112,233.7 113,232.3 114,230.9 115,229.3 116,228.8 117,227.6 118,225.8 119,225.8 120,225.8 121,226.9 122,227.6 123,229.1 124,232.0 125,235.0 126,238.1 127,241.4 128,244.6 129,246.5 130,248.7 131,251.4 132,254.0 133,256.0 134,257.7 135,259.9 136,262.4 137,264.0 138,266.0 139,268.6 140,269.8 141,269.8 142,270.7 143,272.1 144,273.4 145,274.0 146,275.6 147,277.8 148,278.4 149,278.8 150,280.5 151,282.8 152,284.9 153,286.5 154,287.8 155,288.6 156,290.5 157,293.0 158,294.5 159,296.0 160,297.8 161,298.6 162,299.2 163,300.4 164,301.3 165,302.7 166,303.4 167,303.3 168,303.6 169,303.8 170,304.2 171,304.3 172,303.4 173,302.1 174,301.6 175,301.2 176,299.3 177,297.7 178,296.1 179,294.8 180,293.7 181,292.4 182,291.9 183,290.7 184,288.7 185,288.6 186,288.4 187,288.0 188,288.3 189,288.8 190,287.4 191,286.3 192,286.5 193,285.7 194,285.6 195,285.1 196,284.5 197,284.6 198,284.5 199,285.2 200,285.4 201,286.3 202,287.5 203,288.5 204,290.3 205,292.0 206,292.7 207,293.2 208,294.8 209,295.5 210,295.0 211,295.8 212,296.4 213,296.6 214,297.1 215,297.2 216,296.5 217,296.3 218,296.0 219,294.8 220,293.9 221,292.9 222,292.0 223,291.2 224,290.0 225,289.5 226,289.1 227,288.7 228,290.3 229,292.3 230,293.8 231,293.7 232,293.4 233,292.4 234,291.1 235,290.2 236,289.2 237,288.3 238,287.3 239,285.2 240,283.6 241,281.1 242,278.3 243,275.5 244,272.6 245,269.8 246,267.3 247,265.2 248,262.9 249,260.7 250,258.3 251,256.1 252,254.2 253,251.9 254,249.3 255,246.8 256,244.7 257,241.4 258,238.5 259,236.9 260,235.3 261,234.4 262,233.4 263,232.4 264,231.7 265,230.5 266,229.0 267,228.1 268,227.4 269,228.7 270,230.8 271,233.0 272,235.5 273,238.6 274,242.6 275,246.4 276,249.4 277,251.1 278,252.6 279,254.9 280,257.0 281,258.6 282,260.9 283,263.1 284,265.4 285,267.9 286,268.9 287,269.6 288,270.5 289,271.7 290,273.2 291,274.0 292,274.9 293,276.9 294,278.0 295,278.1 296,279.6 297,281.1 298,282.1 299,283.1 300,283.7 301,284.8 302,285.9 303,286.0 304,287.2 305,288.3 306,288.8 307,289.2 308,289.4 309,290.3 310,290.9 311,291.9 312,292.1 313,292.4 314,293.1 315,293.7 316,294.5 317,294.6 318,295.2 319,295.3 320,295.0 321,294.6 322,294.2 323,294.7 324,294.7 325,293.6 326,292.3 327,290.5 328,289.6 329,289.2 330,288.3 331,287.9 332,287.6 333,288.3 334,289.0 335,290.0 336,290.9 337,291.9 338,292.7 339,293.4 340,294.6 341,296.0 342,296.9 343,297.6 344,297.7 345,298.0 346,299.3 347,300.1 348,300.3 349,300.1 350,300.2 351,301.1 352,302.8 353,303.4 354,302.8 355,303.2 356,303.9 357,304.2 358,304.6 359,304.7 360,305.3 361,306.5 362,307.3 363,308.1 364,308.3 365,308.8 366,309.8 367,310.1 368,311.1 369,310.6 370,309.6 371,309.1 372,308.5 373,307.8 374,307.2 375,306.4 376,305.1 377,305.0 378,304.3 379,302.9 380,301.9 381,300.4 382,299.6 383,299.3 384,298.7 385,297.7 386,296.2 387,294.4 388,292.5 389,290.1 390,287.9 391,285.6 392,283.0 393,281.1 394,278.7 395,275.9 396,274.2 397,271.6 398,269.8 399,268.3 400,266.2 401,264.0 402,261.2 403,259.0 404,257.1 405,255.0 406,253.1 407,250.6 408,249.2 409,248.2 410,246.4 411,245.3 412,244.6 413,244.2 414,244.0 415,244.4 416,244.3 417,243.4 418,243.6 419,244.6 420,244.8 421,243.9 422,244.8 423,246.6 424,247.4 425,248.8 426,250.0 427,250.8 428,252.8 429,254.4 430,255.7 431,257.3 432,258.8 432,496.1 431,496.2 430,496.1 429,496.0 428,496.4 427,496.5 426,496.1 425,495.8 424,496.2 423,496.5 422,496.0 421,496.3 420,496.4 419,495.9 418,496.1 417,496.7 416,496.7 415,496.6 414,496.2 413,495.8 412,496.4 411,496.3 410,496.6 409,496.2 408,495.3 407,496.1 406,496.6 405,496.4 404,496.0 403,495.7 402,496.0 401,496.6 400,496.4 399,496.3 398,496.5 397,496.1 396,495.5 395,495.2 394,495.3 393,495.6 392,495.8 391,496.0 390,496.7 389,496.3 388,495.8 387,496.2 386,496.3 385,495.8 384,495.8 383,496.1 382,496.0 381,496.4 380,496.3 379,495.8 378,496.2 377,496.5 376,496.6 375,496.8 374,497.2 373,497.2 372,497.2 371,497.7 370,498.0 369,498.5 368,499.0 367,498.9 366,498.3 365,498.3 364,499.0 363,498.5 362,498.7 361,498.5 360,497.9 359,498.5 358,499.0 357,498.7 356,498.8 355,499.5 354,499.1 353,498.7 352,498.7 351,498.0 350,497.8 349,498.0 348,498.2 347,498.1 346,497.8 345,497.1 344,496.2 343,496.8 342,497.4 341,496.6 340,496.2 339,496.1 338,495.8 337,496.0 336,496.2 335,496.3 334,496.4 333,495.7 332,495.7 331,496.2 330,496.2 329,496.3 328,496.5 327,496.5 326,496.0 325,495.8 324,495.7 323,495.7 322,496.1 321,496.2 320,495.8 319,495.9 318,496.3 317,496.4 316,496.1 315,496.3 314,496.4 313,496.2 312,496.2 311,495.2 310,495.2 309,496.4 308,497.0 307,496.9 306,496.0 305,495.6 304,496.2 303,496.3 302,496.2 301,496.7 300,496.8 299,496.4 298,496.3 297,496.3 296,496.1 295,496.2 294,496.8 293,497.0 292,496.3 291,495.8 290,496.0 289,495.8 288,495.9 287,496.2 286,496.3 285,496.7 284,496.4 283,496.2 282,496.2 281,496.5 280,496.6 279,496.3 278,495.8 277,496.1 276,496.5 275,496.1 274,495.7 273,496.1 272,496.0 271,495.2 270,495.4 269,496.4 268,496.5 267,496.0 266,496.6 265,497.1 264,496.9 263,496.5 262,496.7 261,496.7 260,496.2 259,496.1 258,495.9 257,495.9 256,496.5 255,496.6 254,496.6 253,496.8 252,496.6 251,496.7 250,496.7 249,496.0 248,495.6 247,496.1 246,496.3 245,496.0 244,495.9 243,496.1 242,496.0 241,496.0 240,496.5 239,496.5 238,496.2 237,496.5 236,496.2 235,496.0 234,495.7 233,495.7 232,496.2 231,495.9 230,495.8 229,496.2 228,496.4 227,496.6 226,496.2 225,496.0 224,495.9 223,495.5 222,495.6 221,496.0 220,496.4 219,496.5 218,495.9 217,495.7 216,495.5 215,495.7 214,496.2 213,496.1 212,496.4 211,496.0 210,495.9 209,496.0 208,495.2 207,495.5 206,496.3 205,496.2 204,496.0 203,496.4 202,496.4 201,496.0 200,496.6 199,496.6 198,496.0 197,495.8 196,496.4 195,497.0 194,496.6 193,496.6 192,497.1 191,496.8 190,496.3 189,496.0 188,495.9 187,496.0 186,495.8 185,495.6 184,496.1 183,496.2 182,496.7 181,496.6 180,496.0 179,496.3 178,496.6 177,496.9 176,497.0 175,497.5 174,497.8 173,497.8 172,498.1 171,498.0 170,497.7 169,497.8 168,498.4 167,498.0 166,497.5 165,497.7 164,497.7 163,498.1 162,498.4 161,497.7 160,498.1 159,498.3 158,497.8 157,497.9 156,498.0 155,498.2 154,498.1 153,498.0 152,498.2 151,497.9 150,497.7 149,497.9 148,497.8 147,498.0 146,498.1 145,498.2 144,498.4 143,498.0 142,497.8 141,498.1 140,498.0 139,497.5 138,497.6 137,498.4 136,498.6 135,498.1 134,497.9 133,498.0 132,498.3 131,497.9 130,497.6 129,498.2 128,498.1 127,497.8 126,498.2 125,498.3 124,498.2 123,498.1 122,497.9 121,498.3 120,498.1 119,498.0 118,498.1 117,497.5 116,497.6 115,497.7 114,497.5 113,497.8 112,497.6 111,497.0 110,497.5 109,498.0 108,497.9 107,497.0 106,496.9 105,497.4 104,497.3 103,497.6 102,497.6 101,497.6 100,497.3 99,497.1 98,497.7 97,497.7 96,497.2 95,496.8 94,497.3 93,497.5 92,497.5 91,497.2 90,496.3 89,496.5 88,497.4 87,497.9 86,497.2 85,497.0 84,497.1 83,497.2 82,497.2 81,496.8 80,497.1 79,497.1 78,496.7 77,496.2 76,496.6 75,497.5 74,497.1 73,496.9 72,497.0 71,496.7 70,497.3 69,497.2 68,497.1 67,497.5 66,496.9 65,497.0 64,497.0 63,497.3 62,497.4 61,497.0 60,497.1 59,497.2 58,497.3 57,497.2 56,497.2 55,497.3 54,497.3 53,496.8 52,496.9 51,497.0 50,497.0 49,496.9 48,496.6 47,497.0 46,496.9 45,496.6 44,497.0 43,496.8 42,496.4 41,496.6 40,496.7 39,496.3 38,496.1 37,496.6 36,496.8 35,496.3 34,496.3 33,496.5 32,496.6 31,496.6 30,496.3 29,496.5 28,496.7 27,496.6 26,496.7 25,496.6 24,496.1 23,496.3 22,496.4 21,496.4 20,496.4 19,496.6 18,496.5 17,496.3 16,495.7 15,495.2 14,495.9 13,496.4 12,495.9 11,496.2 10,496.8 9,496.4 8,496.4 7,496.4 6,496.4 5,496.5 4,496.3 3,496.1 2,496.1 1,496.0 0,496.0"/>
<polygon fill="#FBB46A" points="0,283.0 1,284.1 2,286.0 3,287.6 4,288.3 5,289.3 6,291.2 7,292.6 8,293.8 9,295.5 10,297.9 11,299.6 12,301.0 13,302.9 14,303.8 15,304.1 16,304.5 17,304.1 18,304.8 19,305.3 20,305.6 21,306.1 22,306.2 23,306.7 24,307.4 25,307.9 26,306.4 27,305.3 28,304.1 29,301.9 30,300.0 31,298.5 32,297.0 33,295.5 34,293.9 35,292.8 36,292.1 37,291.3 38,290.1 39,288.8 40,288.3 41,287.6 42,286.7 43,286.1 44,286.0 45,286.1 46,285.7 47,285.8 48,286.1 49,285.7 50,286.5 51,288.1 52,289.2 53,290.2 54,291.3 55,291.3 56,292.2 57,293.5 58,294.2 59,295.9 60,297.1 61,298.6 62,300.0 63,301.2 64,302.1 65,303.0 66,304.4 67,305.3 68,304.7 69,303.6 70,301.5 71,299.9 72,299.2 73,297.9 74,296.6 75,295.3 76,293.5 77,291.1 78,289.4 79,288.4 80,286.7 81,285.5 82,284.3 83,283.9 84,283.1 85,282.7 86,282.3 87,281.6 88,280.9 89,279.6 90,278.5 91,277.6 92,276.1 93,274.5 94,271.7 95,268.0 96,265.0 97,265.1 98,266.3 99,266.7 100,264.8 101,263.3 102,262.3 103,261.0 104,259.6 105,257.5 106,255.5 107,254.0 108,252.7 109,251.1 110,249.1 111,247.7 112,246.5 113,245.2 114,243.7 115,242.4 116,242.3 117,241.1 118,239.5 119,239.4 120,239.0 121,239.8 122,240.6 123,241.8 124,243.8 125,245.9 126,248.3 127,250.7 128,253.4 129,255.4 130,257.3 131,259.1 132,261.2 133,263.0 134,264.2 135,265.7 136,267.8 137,269.1 138,271.0 139,272.9 140,273.7 141,274.0 142,274.9 143,275.5 144,276.4 145,277.0 146,278.3 147,280.4 148,281.4 149,281.9 150,283.5 151,285.5 152,287.6 153,289.6 154,290.8 155,291.6 156,293.8 157,296.3 158,297.4 159,298.6 160,300.5 161,301.8 162,302.4 163,303.2 164,304.1 165,305.4 166,306.3 167,306.0 168,306.1 169,306.5 170,306.8 171,306.6 172,306.1 173,305.1 174,304.6 175,304.2 176,302.3 177,300.6 178,299.0 179,297.6 180,296.5 181,295.0 182,294.0 183,292.8 184,291.2 185,290.8 186,290.5 187,290.5 188,291.3 189,291.9 190,290.8 191,289.5 192,289.1 193,288.0 194,287.6 195,287.4 196,286.7 197,286.9 198,287.3 199,288.2 200,288.9 201,289.7 202,290.8 203,291.8 204,293.1 205,294.7 206,295.5 207,296.2 208,297.6 209,298.3 210,298.3 211,299.1 212,299.2 213,299.6 214,300.0 215,299.8 216,298.9 217,298.5 218,298.2 219,297.4 220,296.5 221,295.3 222,294.5 223,293.5 224,292.6 225,292.7 226,292.7 227,292.6 228,293.7 229,295.2 230,296.7 231,297.1 232,297.3 233,295.8 234,294.5 235,293.6 236,292.4 237,291.3 238,290.9 239,289.4 240,287.9 241,286.1 242,284.5 243,282.6 244,279.8 245,277.1 246,274.8 247,273.1 248,270.8 249,268.5 250,266.3 251,264.3 252,262.4 253,260.1 254,257.4 255,254.9 256,253.1 257,250.6 258,248.0 259,246.5 260,245.0 261,243.9 262,243.1 263,242.2 264,241.6 265,240.3 266,238.8 267,238.4 268,238.3 269,239.7 270,241.4 271,243.5 272,246.0 273,248.7 274,252.3 275,255.9 276,258.6 277,260.2 278,262.0 279,264.1 280,265.7 281,267.0 282,269.1 283,271.0 284,273.0 285,275.2 286,276.0 287,276.7 288,277.5 289,278.4 290,279.8 291,280.5 292,281.1 293,282.4 294,283.3 295,283.6 296,284.7 297,286.2 298,287.4 299,287.8 300,287.9 301,288.9 302,289.8 303,289.9 304,290.7 305,291.7 306,292.5 307,292.5 308,292.4 309,293.3 310,294.1 311,294.7 312,294.9 313,295.5 314,295.9 315,296.6 316,297.2 317,297.0 318,297.8 319,298.3 320,298.2 321,297.8 322,297.8 323,298.3 324,298.3 325,297.2 326,296.1 327,294.9 328,293.7 329,292.8 330,291.9 331,291.2 332,291.0 333,291.8 334,292.5 335,293.3 336,294.1 337,295.2 338,296.1 339,296.8 340,298.0 341,299.1 342,299.7 343,300.6 344,300.9 345,301.3 346,302.2 347,302.9 348,303.2 349,303.2 350,303.6 351,304.2 352,305.6 353,306.0 354,305.3 355,305.9 356,306.5 357,306.8 358,307.1 359,307.3 360,307.7 361,308.4 362,309.2 363,310.2 364,310.4 365,310.6 366,311.5 367,312.2 368,313.3 369,312.8 370,312.0 371,311.7 372,311.1 373,310.6 374,309.8 375,308.9 376,308.0 377,307.7 378,307.1 379,305.8 380,304.9 381,303.6 382,302.8 383,302.1 384,301.1 385,300.0 386,298.5 387,296.8 388,294.9 389,292.6 390,290.6 391,288.7 392,286.3 393,284.5 394,282.8 395,280.4 396,278.0 397,275.6 398,274.2 399,272.5 400,271.0 401,269.6 402,267.1 403,265.2 404,263.6 405,262.0 406,260.3 407,258.0 408,256.5 409,255.5 410,253.9 411,252.7 412,252.2 413,252.1 414,251.9 415,252.2 416,251.9 417,251.4 418,251.9 419,252.4 420,252.5 421,252.0 422,252.7 423,254.5 424,255.4 425,256.9 426,258.0 427,258.4 428,260.0 429,261.1 430,262.3 431,263.9 432,264.9 432,496.1 431,496.2 430,496.1 429,496.0 428,496.4 427,496.5 426,496.1 425,495.8 424,496.2 423,496.5 422,496.0 421,496.3 420,496.4 419,495.9 418,496.1 417,496.7 416,496.7 415,496.6 414,496.2 413,495.8 412,496.4 411,496.3 410,496.6 409,496.2 408,495.3 407,496.1 406,496.6 405,496.4 404,496.0 403,495.7 402,496.0 401,496.6 400,496.4 399,496.3 398,496.5 397,496.1 396,495.5 395,495.2 394,495.3 393,495.6 392,495.8 391,496.0 390,496.7 389,496.3 388,495.8 387,496.2 386,496.3 385,495.8 384,495.8 383,496.1 382,496.0 381,496.4 380,496.3 379,495.8 378,496.2 377,496.5 376,496.6 375,496.8 374,497.2 373,497.2 372,497.2 371,497.7 370,498.0 369,498.5 368,499.0 367,498.9 366,498.3 365,498.3 364,499.0 363,498.5 362,498.7 361,498.5 360,497.9 359,498.5 358,499.0 357,498.7 356,498.8 355,499.5 354,499.1 353,498.7 352,498.7 351,498.0 350,497.8 349,498.0 348,498.2 347,498.1 346,497.8 345,497.1 344,496.2 343,496.8 342,497.4 341,496.6 340,496.2 339,496.1 338,495.8 337,496.0 336,496.2 335,496.3 334,496.4 333,495.7 332,495.7 331,496.2 330,496.2 329,496.3 328,496.5 327,496.5 326,496.0 325,495.8 324,495.7 323,495.7 322,496.1 321,496.2 320,495.8 319,495.9 318,496.3 317,496.4 316,496.1 315,496.3 314,496.4 313,496.2 312,496.2 311,495.2 310,495.2 309,496.4 308,497.0 307,496.9 306,496.0 305,495.6 304,496.2 303,496.3 302,496.2 301,496.7 300,496.8 299,496.4 298,496.3 297,496.3 296,496.1 295,496.2 294,496.8 293,497.0 292,496.3 291,495.8 290,496.0 289,495.8 288,495.9 287,496.2 286,496.3 285,496.7 284,496.4 283,496.2 282,496.2 281,496.5 280,496.6 279,496.3 278,495.8 277,496.1 276,496.5 275,496.1 274,495.7 273,496.1 272,496.0 271,495.2 270,495.4 269,496.4 268,496.5 267,496.0 266,496.6 265,497.1 264,496.9 263,496.5 262,496.7 261,496.7 260,496.2 259,496.1 258,495.9 257,495.9 256,496.5 255,496.6 254,496.6 253,496.8 252,496.6 251,496.7 250,496.7 249,496.0 248,495.6 247,496.1 246,496.3 245,496.0 244,495.9 243,496.1 242,496.0 241,496.0 240,496.5 239,496.5 238,496.2 237,496.5 236,496.2 235,496.0 234,495.7 233,495.7 232,496.2 231,495.9 230,495.8 229,496.2 228,496.4 227,496.6 226,496.2 225,496.0 224,495.9 223,495.5 222,495.6 221,496.0 220,496.4 219,496.5 218,495.9 217,495.7 216,495.5 215,495.7 214,496.2 213,496.1 212,496.4 211,496.0 210,495.9 209,496.0 208,495.2 207,495.5 206,496.3 205,496.2 204,496.0 203,496.4 202,496.4 201,496.0 200,496.6 199,496.6 198,496.0 197,495.8 196,496.4 195,497.0 194,496.6 193,496.6 192,497.1 191,496.8 190,496.3 189,496.0 188,495.9 187,496.0 186,495.8 185,495.6 184,496.1 183,496.2 182,496.7 181,496.6 180,496.0 179,496.3 178,496.6 177,496.9 176,497.0 175,497.5 174,497.8 173,497.8 172,498.1 171,498.0 170,497.7 169,497.8 168,498.4 167,498.0 166,497.5 165,497.7 164,497.7 163,498.1 162,498.4 161,497.7 160,498.1 159,498.3 158,497.8 157,497.9 156,498.0 155,498.2 154,498.1 153,498.0 152,498.2 151,497.9 150,497.7 149,497.9 148,497.8 147,498.0 146,498.1 145,498.2 144,498.4 143,498.0 142,497.8 141,498.1 140,498.0 139,497.5 138,497.6 137,498.4 136,498.6 135,498.1 134,497.9 133,498.0 132,498.3 131,497.9 130,497.6 129,498.2 128,498.1 127,497.8 126,498.2 125,498.3 124,498.2 123,498.1 122,497.9 121,498.3 120,498.1 119,498.0 118,498.1 117,497.5 116,497.6 115,497.7 114,497.5 113,497.8 112,497.6 111,497.0 110,497.5 109,498.0 108,497.9 107,497.0 106,496.9 105,497.4 104,497.3 103,497.6 102,497.6 101,497.6 100,497.3 99,497.1 98,497.7 97,497.7 96,497.2 95,496.8 94,497.3 93,497.5 92,497.5 91,497.2 90,496.3 89,496.5 88,497.4 87,497.9 86,497.2 85,497.0 84,497.1 83,497.2 82,497.2 81,496.8 80,497.1 79,497.1 78,496.7 77,496.2 76,496.6 75,497.5 74,497.1 73,496.9 72,497.0 71,496.7 70,497.3 69,497.2 68,497.1 67,497.5 66,496.9 65,497.0 64,497.0 63,497.3 62,497.4 61,497.0 60,497.1 59,497.2 58,497.3 57,497.2 56,497.2 55,497.3 54,497.3 53,496.8 52,496.9 51,497.0 50,497.0 49,496.9 48,496.6 47,497.0 46,496.9 45,496.6 44,497.0 43,496.8 42,496.4 41,496.6 40,496.7 39,496.3 38,496.1 37,496.6 36,496.8 35,496.3 34,496.3 33,496.5 32,496.6 31,496.6 30,496.3 29,496.5 28,496.7 27,496.6 26,496.7 25,496.6 24,496.1 23,496.3 22,496.4 21,496.4 20,496.4 19,496.6 18,496.5 17,496.3 16,495.7 15,495.2 14,495.9 13,496.4 12,495.9 11,496.2 10,496.8 9,496.4 8,496.4 7,496.4 6,496.4 5,496.5 4,496.3 3,496.1 2,496.1 1,496.0 0,496.0"/>
<polygon fill="#F5962A" points="0,290.8 1,291.0 2,292.4 3,294.4 4,295.7 5,297.2 6,298.7 7,299.6 8,298.9 9,299.9 10,302.1 11,303.1 12,303.6 13,305.5 14,306.4 15,306.8 16,307.6 17,306.9 18,307.0 19,308.1 20,309.3 21,309.7 22,309.5 23,310.1 24,311.1 25,311.8 26,310.5 27,309.7 28,307.9 29,304.4 30,302.8 31,302.7 32,301.8 33,299.7 34,297.5 35,295.6 36,295.3 37,295.4 38,294.0 39,292.6 40,292.6 41,292.2 42,291.4 43,292.4 44,293.6 45,293.8 46,294.0 47,294.6 48,294.6 49,294.9 50,296.7 51,298.7 52,299.5 53,299.7 54,300.3 55,300.2 56,300.4 57,300.8 58,301.4 59,303.7 60,304.6 61,306.3 62,307.6 63,308.3 64,309.5 65,311.1 66,312.6 67,313.5 68,312.8 69,310.9 70,308.0 71,306.6 72,306.3 73,305.1 74,303.4 75,302.3 76,301.6 77,298.6 78,297.5 79,298.0 80,296.3 81,295.4 82,294.8 83,294.9 84,293.9 85,293.7 86,293.9 87,293.7 88,293.5 89,292.2 90,291.2 91,290.8 92,289.9 93,288.9 94,287.2 95,284.9 96,282.1 97,280.9 98,282.5 99,283.5 100,282.1 101,280.5 102,280.4 103,279.6 104,278.4 105,276.8 106,275.3 107,274.4 108,274.2 109,273.3 110,271.1 111,270.0 112,269.8 113,268.9 114,267.2 115,266.1 116,266.8 117,265.7 118,264.2 119,263.9 120,262.9 121,263.3 122,264.3 123,265.2 124,265.8 125,266.5 126,267.9 127,268.8 128,270.7 129,273.0 130,274.4 131,274.9 132,276.1 133,277.7 134,278.1 135,278.8 136,280.0 137,281.0 138,282.8 139,283.7 140,283.6 141,284.4 142,285.3 143,284.4 144,284.0 145,284.8 146,285.3 147,287.0 148,289.1 149,290.0 150,291.1 151,292.6 152,294.7 153,297.5 154,298.6 155,299.3 156,302.2 157,304.8 158,305.1 159,305.5 160,307.6 161,309.8 162,310.4 163,310.4 164,311.2 165,312.4 166,313.8 167,313.0 168,312.4 169,313.2 170,313.3 171,312.8 172,312.8 173,312.9 174,312.1 175,312.0 176,309.9 177,308.0 178,306.4 179,304.6 180,303.5 181,301.8 182,299.2 183,298.4 184,297.6 185,296.4 186,295.7 187,296.8 188,298.7 189,299.8 190,299.6 191,297.6 192,296.0 193,294.1 194,292.9 195,293.6 196,292.6 197,293.0 198,294.7 199,296.1 200,298.1 201,298.5 202,299.4 203,300.3 204,300.3 205,301.6 206,302.9 207,303.8 208,304.6 209,305.4 210,306.7 211,307.4 212,306.7 213,307.2 214,307.4 215,306.5 216,305.0 217,304.0 218,304.0 219,304.0 220,303.1 221,301.7 222,300.7 223,299.5 224,299.2 225,300.8 226,301.9 227,302.5 228,302.5 229,302.9 230,304.1 231,305.9 232,307.4 233,304.7 234,303.2 235,302.5 236,300.8 237,299.2 238,300.1 239,299.9 240,298.6 241,297.8 242,298.1 243,297.4 244,294.9 245,292.1 246,290.1 247,289.1 248,286.8 249,284.5 250,282.5 251,280.8 252,278.9 253,276.5 254,273.8 255,271.2 256,270.0 257,268.7 258,266.4 259,265.1 260,263.6 261,262.3 262,261.8 263,261.0 264,260.7 265,259.4 266,257.7 267,258.1 268,258.8 269,260.5 270,261.6 271,263.3 272,266.0 273,268.0 274,271.0 275,274.4 276,276.5 277,278.1 278,280.3 279,282.0 280,283.1 281,283.8 282,285.6 283,287.0 284,288.5 285,290.5 286,291.0 287,291.5 288,292.3 289,292.7 290,293.8 291,294.4 292,294.7 293,294.8 294,295.6 295,296.1 296,296.4 297,298.2 298,299.4 299,299.1 300,298.4 301,299.1 302,299.9 303,300.0 304,299.8 305,300.4 306,302.0 307,301.0 308,300.2 309,301.0 310,302.2 311,302.0 312,302.1 313,303.4 314,303.3 315,304.2 316,304.0 317,303.4 318,304.4 319,305.8 320,306.4 321,306.1 322,306.9 323,307.5 324,307.3 325,306.3 326,305.7 327,305.6 328,304.0 329,301.9 330,301.2 331,299.8 332,299.6 333,300.9 334,301.5 335,301.9 336,302.1 337,303.5 338,304.8 339,305.4 340,306.9 341,307.1 342,306.9 343,308.4 344,309.2 345,309.6 346,309.8 347,310.3 348,310.8 349,311.4 350,312.4 351,312.1 352,312.7 353,312.8 354,311.9 355,312.7 356,313.4 357,313.5 358,313.6 359,314.0 360,314.1 361,313.5 362,313.9 363,315.5 364,315.8 365,315.2 366,316.0 367,317.7 368,319.2 369,318.5 370,318.2 371,318.3 372,318.0 373,317.8 374,316.4 375,315.5 376,315.3 377,314.7 378,314.1 379,313.1 380,312.6 381,311.8 382,311.1 383,309.3 384,307.1 385,305.8 386,304.6 387,303.0 388,301.1 389,298.9 390,297.7 391,296.8 392,294.9 393,293.2 394,293.3 395,291.4 396,288.0 397,285.8 398,285.0 399,282.9 400,282.5 401,282.1 402,280.3 403,278.6 404,277.4 405,276.6 406,275.3 407,273.1 408,271.6 409,270.7 410,269.3 411,268.0 412,267.8 413,268.1 414,268.0 415,268.2 416,267.6 417,267.5 418,268.5 419,268.3 420,268.3 421,268.4 422,268.7 423,270.5 424,271.8 425,273.3 426,274.2 427,274.1 428,275.0 429,275.3 430,276.5 431,278.2 432,278.4 432,496.1 431,496.2 430,496.1 429,496.0 428,496.4 427,496.5 426,496.1 425,495.8 424,496.2 423,496.5 422,496.0 421,496.3 420,496.4 419,495.9 418,496.1 417,496.7 416,496.7 415,496.6 414,496.2 413,495.8 412,496.4 411,496.3 410,496.6 409,496.2 408,495.3 407,496.1 406,496.6 405,496.4 404,496.0 403,495.7 402,496.0 401,496.6 400,496.4 399,496.3 398,496.5 397,496.1 396,495.5 395,495.2 394,495.3 393,495.6 392,495.8 391,496.0 390,496.7 389,496.3 388,495.8 387,496.2 386,496.3 385,495.8 384,495.8 383,496.1 382,496.0 381,496.4 380,496.3 379,495.8 378,496.2 377,496.5 376,496.6 375,496.8 374,497.2 373,497.2 372,497.2 371,497.7 370,498.0 369,498.5 368,499.0 367,498.9 366,498.3 365,498.3 364,499.0 363,498.5 362,498.7 361,498.5 360,497.9 359,498.5 358,499.0 357,498.7 356,498.8 355,499.5 354,499.1 353,498.7 352,498.7 351,498.0 350,497.8 349,498.0 348,498.2 347,498.1 346,497.8 345,497.1 344,496.2 343,496.8 342,497.4 341,496.6 340,496.2 339,496.1 338,495.8 337,496.0 336,496.2 335,496.3 334,496.4 333,495.7 332,495.7 331,496.2 330,496.2 329,496.3 328,496.5 327,496.5 326,496.0 325,495.8 324,495.7 323,495.7 322,496.1 321,496.2 320,495.8 319,495.9 318,496.3 317,496.4 316,496.1 315,496.3 314,496.4 313,496.2 312,496.2 311,495.2 310,495.2 309,496.4 308,497.0 307,496.9 306,496.0 305,495.6 304,496.2 303,496.3 302,496.2 301,496.7 300,496.8 299,496.4 298,496.3 297,496.3 296,496.1 295,496.2 294,496.8 293,497.0 292,496.3 291,495.8 290,496.0 289,495.8 288,495.9 287,496.2 286,496.3 285,496.7 284,496.4 283,496.2 282,496.2 281,496.5 280,496.6 279,496.3 278,495.8 277,496.1 276,496.5 275,496.1 274,495.7 273,496.1 272,496.0 271,495.2 270,495.4 269,496.4 268,496.5 267,496.0 266,496.6 265,497.1 264,496.9 263,496.5 262,496.7 261,496.7 260,496.2 259,496.1 258,495.9 257,495.9 256,496.5 255,496.6 254,496.6 253,496.8 252,496.6 251,496.7 250,496.7 249,496.0 248,495.6 247,496.1 246,496.3 245,496.0 244,495.9 243,496.1 242,496.0 241,496.0 240,496.5 239,496.5 238,496.2 237,496.5 236,496.2 235,496.0 234,495.7 233,495.7 232,496.2 231,495.9 230,495.8 229,496.2 228,496.4 227,496.6 226,496.2 225,496.0 224,495.9 223,495.5 222,495.6 221,496.0 220,496.4 219,496.5 218,495.9 217,495.7 216,495.5 215,495.7 214,496.2 213,496.1 212,496.4 211,496.0 210,495.9 209,496.0 208,495.2 207,495.5 206,496.3 205,496.2 204,496.0 203,496.4 202,496.4 201,496.0 200,496.6 199,496.6 198,496.0 197,495.8 196,496.4 195,497.0 194,496.6 193,496.6 192,497.1 191,496.8 190,496.3 189,496.0 188,495.9 187,496.0 186,495.8 185,495.6 184,496.1 183,496.2 182,496.7 181,496.6 180,496.0 179,496.3 178,496.6 177,496.9 176,497.0 175,497.5 174,497.8 173,497.8 172,498.1 171,498.0 170,497.7 169,497.8 168,498.4 167,498.0 166,497.5 165,497.7 164,497.7 163,498.1 162,498.4 161,497.7 160,498.1 159,498.3 158,497.8 157,497.9 156,498.0 155,498.2 154,498.1 153,498.0 152,498.2 151,497.9 150,497.7 149,497.9 148,497.8 147,498.0 146,498.1 145,498.2 144,498.4 143,498.0 142,497.8 141,498.1 140,498.0 139,497.5 138,497.6 137,498.4 136,498.6 135,498.1 134,497.9 133,498.0 132,498.3 131,497.9 130,497.6 129,498.2 128,498.1 127,497.8 126,498.2 125,498.3 124,498.2 123,498.1 122,497.9 121,498.3 120,498.1 119,498.0 118,498.1 117,497.5 116,497.6 115,497.7 114,497.5 113,497.8 112,497.6 111,497.0 110,497.5 109,498.0 108,497.9 107,497.0 106,496.9 105,497.4 104,497.3 103,497.6 102,497.6 101,497.6 100,497.3 99,497.1 98,497.7 97,497.7 96,497.2 95,496.8 94,497.3 93,497.5 92,497.5 91,497.2 90,496.3 89,496.5 88,497.4 87,497.9 86,497.2 85,497.0 84,497.1 83,497.2 82,497.2 81,496.8 80,497.1 79,497.1 78,496.7 77,496.2 76,496.6 75,497.5 74,497.1 73,496.9 72,497.0 71,496.7 70,497.3 69,497.2 68,497.1 67,497.5 66,496.9 65,497.0 64,497.0 63,497.3 62,497.4 61,497.0 60,497.1 59,497.2 58,497.3 57,497.2 56,497.2 55,497.3 54,497.3 53,496.8 52,496.9 51,497.0 50,497.0 49,496.9 48,496.6 47,497.0 46,496.9 45,496.6 44,497.0 43,496.8 42,496.4 41,496.6 40,496.7 39,496.3 38,496.1 37,496.6 36,496.8 35,496.3 34,496.3 33,496.5 32,496.6 31,496.6 30,496.3 29,496.5 28,496.7 27,496.6 26,496.7 25,496.6 24,496.1 23,496.3 22,496.4 21,496.4 20,496.4 19,496.6 18,496.5 17,496.3 16,495.7 15,495.2 14,495.9 13,496.4 12,495.9 11,496.2 10,496.8 9,496.4 8,496.4 7,496.4 6,496.4 5,496.5 4,496.3 3,496.1 2,496.1 1,496.0 0,496.0"/>
<polygon fill="#131313" points="0,290.8 1,291.0 2,292.4 3,294.4 4,295.7 5,297.2 6,298.7 7,299.6 8,298.9 9,299.9 10,302.1 11,303.1 12,303.6 13,305.5 14,306.4 15,306.8 16,307.6 17,306.9 18,307.0 19,308.1 20,309.3 21,309.7 22,309.5 23,310.1 24,311.1 25,311.8 26,310.5 27,309.7 28,307.9 29,304.4 30,302.8 31,302.7 32,301.8 33,299.7 34,297.5 35,295.6 36,295.3 37,295.4 38,294.0 39,292.6 40,292.6 41,292.2 42,291.4 43,292.4 44,293.6 45,293.8 46,294.0 47,294.6 48,294.6 49,294.9 50,296.8 51,299.0 52,299.7 53,299.7 54,300.3 55,300.2 56,300.4 57,300.8 58,301.4 59,303.7 60,304.6 61,306.3 62,307.6 63,308.3 64,309.5 65,311.1 66,312.6 67,313.5 68,312.8 69,310.9 70,308.0 71,306.6 72,306.3 73,305.1 74,303.4 75,302.3 76,301.6 77,298.6 78,297.5 79,298.0 80,296.3 81,295.4 82,295.1 83,295.5 84,294.5 85,294.3 86,294.9 87,295.1 88,295.2 89,294.0 90,293.2 91,293.1 92,292.6 93,292.1 94,291.1 95,289.7 96,287.1 97,285.0 98,286.9 99,288.4 100,287.2 101,285.7 102,286.1 103,285.7 104,284.6 105,283.5 106,282.2 107,281.9 108,282.4 109,282.0 110,279.5 111,278.7 112,279.2 113,278.5 114,276.8 115,275.9 116,277.0 117,276.0 118,274.6 119,274.2 120,272.8 121,272.9 122,274.0 123,274.7 124,274.3 125,274.1 126,274.7 127,274.5 128,275.9 129,278.3 130,279.4 131,279.0 132,279.6 133,281.0 134,280.8 135,280.9 136,281.5 137,282.2 138,284.0 139,284.2 140,283.6 141,284.7 142,285.5 143,284.4 144,284.0 145,284.8 146,285.3 147,287.0 148,289.1 149,290.0 150,291.1 151,292.6 152,294.7 153,297.5 154,298.6 155,299.3 156,302.2 157,304.8 158,305.1 159,305.5 160,307.6 161,309.8 162,310.4 163,310.4 164,311.2 165,312.4 166,313.8 167,313.0 168,312.4 169,313.2 170,313.3 171,312.8 172,312.8 173,312.9 174,312.1 175,312.0 176,309.9 177,308.0 178,306.4 179,304.6 180,303.5 181,301.8 182,299.2 183,298.4 184,297.6 185,296.4 186,295.7 187,296.8 188,298.7 189,299.8 190,299.6 191,297.6 192,296.0 193,294.1 194,292.9 195,293.6 196,292.6 197,293.0 198,294.7 199,296.1 200,298.1 201,298.5 202,299.4 203,300.3 204,300.3 205,301.6 206,302.9 207,303.8 208,304.6 209,305.4 210,306.7 211,307.4 212,306.7 213,307.2 214,307.4 215,306.5 216,305.0 217,304.0 218,304.0 219,304.0 220,303.1 221,301.7 222,300.7 223,299.5 224,299.2 225,300.8 226,301.9 227,302.5 228,302.5 229,302.9 230,304.1 231,305.9 232,307.4 233,304.7 234,303.2 235,302.5 236,300.8 237,299.2 238,300.1 239,300.2 240,299.0 241,299.0 242,300.6 243,300.7 244,298.5 245,295.7 246,293.9 247,293.3 248,291.1 249,288.7 250,286.8 251,285.3 252,283.4 253,281.0 254,278.4 255,275.7 256,274.8 257,274.5 258,272.4 259,271.2 260,269.8 261,268.3 262,268.0 263,267.2 264,267.1 265,265.8 266,263.9 267,264.9 268,266.2 269,268.1 270,268.8 271,270.3 272,273.1 273,274.6 274,277.1 275,280.5 276,282.2 277,283.7 278,286.1 279,287.6 280,288.2 281,288.6 282,290.2 283,291.3 284,292.5 285,294.1 286,294.5 287,295.0 288,295.6 289,295.8 290,296.7 291,297.2 292,297.1 293,296.5 294,297.1 295,297.7 296,297.6 297,299.5 298,300.8 299,300.0 300,298.7 301,299.2 302,299.9 303,300.0 304,299.8 305,300.4 306,302.0 307,301.0 308,300.2 309,301.0 310,302.2 311,302.0 312,302.1 313,303.4 314,303.3 315,304.2 316,304.0 317,303.4 318,304.4 319,305.8 320,306.4 321,306.1 322,306.9 323,307.5 324,307.3 325,306.3 326,305.7 327,306.1 328,304.2 329,301.9 330,301.2 331,299.8 332,299.6 333,300.9 334,301.5 335,301.9 336,302.1 337,303.5 338,304.8 339,305.4 340,306.9 341,307.1 342,306.9 343,308.4 344,309.2 345,309.6 346,309.8 347,310.3 348,310.8 349,311.4 350,312.4 351,312.1 352,312.7 353,312.8 354,311.9 355,312.7 356,313.4 357,313.5 358,313.6 359,314.0 360,314.1 361,313.5 362,313.9 363,315.5 364,315.8 365,315.2 366,316.0 367,317.7 368,319.2 369,318.5 370,318.2 371,318.3 372,318.0 373,317.8 374,316.4 375,315.5 376,315.3 377,314.7 378,314.1 379,313.1 380,312.6 381,311.8 382,311.1 383,309.3 384,307.1 385,305.8 386,304.6 387,303.0 388,301.1 389,298.9 390,297.7 391,296.8 392,294.9 393,293.2 394,293.6 395,292.1 396,288.0 397,285.9 398,285.5 399,283.2 400,283.5 401,283.9 402,282.4 403,281.0 404,280.1 405,279.9 406,278.8 407,276.8 408,275.3 409,274.3 410,273.0 411,271.8 412,271.8 413,272.3 414,272.3 415,272.4 416,271.5 417,271.9 418,273.2 419,272.4 420,272.3 421,272.9 422,273.0 423,274.7 424,276.2 425,277.7 426,278.5 427,278.0 428,278.6 429,278.2 430,279.4 431,281.1 432,280.8 432,496.1 431,496.2 430,496.1 429,496.0 428,496.4 427,496.5 426,496.1 425,495.8 424,496.2 423,496.5 422,496.0 421,496.3 420,496.4 419,495.9 418,496.1 417,496.7 416,496.7 415,496.6 414,496.2 413,495.8 412,496.4 411,496.3 410,496.6 409,496.2 408,495.3 407,496.1 406,496.6 405,496.4 404,496.0 403,495.7 402,496.0 401,496.6 400,496.4 399,496.3 398,496.5 397,496.1 396,495.5 395,495.2 394,495.3 393,495.6 392,495.8 391,496.0 390,496.7 389,496.3 388,495.8 387,496.2 386,496.3 385,495.8 384,495.8 383,496.1 382,496.0 381,496.4 380,496.3 379,495.8 378,496.2 377,496.5 376,496.6 375,496.8 374,497.2 373,497.2 372,497.2 371,497.7 370,498.0 369,498.5 368,499.0 367,498.9 366,498.3 365,498.3 364,499.0 363,498.5 362,498.7 361,498.5 360,497.9 359,498.5 358,499.0 357,498.7 356,498.8 355,499.5 354,499.1 353,498.7 352,498.7 351,498.0 350,497.8 349,498.0 348,498.2 347,498.1 346,497.8 345,497.1 344,496.2 343,496.8 342,497.4 341,496.6 340,496.2 339,496.1 338,495.8 337,496.0 336,496.2 335,496.3 334,496.4 333,495.7 332,495.7 331,496.2 330,496.2 329,496.3 328,496.5 327,496.5 326,496.0 325,495.8 324,495.7 323,495.7 322,496.1 321,496.2 320,495.8 319,495.9 318,496.3 317,496.4 316,496.1 315,496.3 314,496.4 313,496.2 312,496.2 311,495.2 310,495.2 309,496.4 308,497.0 307,496.9 306,496.0 305,495.6 304,496.2 303,496.3 302,496.2 301,496.7 300,496.8 299,496.4 298,496.3 297,496.3 296,496.1 295,496.2 294,496.8 293,497.0 292,496.3 291,495.8 290,496.0 289,495.8 288,495.9 287,496.2 286,496.3 285,496.7 284,496.4 283,496.2 282,496.2 281,496.5 280,496.6 279,496.3 278,495.8 277,496.1 276,496.5 275,496.1 274,495.7 273,496.1 272,496.0 271,495.2 270,495.4 269,496.4 268,496.5 267,496.0 266,496.6 265,497.1 264,496.9 263,496.5 262,496.7 261,496.7 260,496.2 259,496.1 258,495.9 257,495.9 256,496.5 255,496.6 254,496.6 253,496.8 252,496.6 251,496.7 250,496.7 249,496.0 248,495.6 247,496.1 246,496.3 245,496.0 244,495.9 243,496.1 242,496.0 241,496.0 240,496.5 239,496.5 238,496.2 237,496.5 236,496.2 235,496.0 234,495.7 233,495.7 232,496.2 231,495.9 230,495.8 229,496.2 228,496.4 227,496.6 226,496.2 225,496.0 224,495.9 223,495.5 222,495.6 221,496.0 220,496.4 219,496.5 218,495.9 217,495.7 216,495.5 215,495.7 214,496.2 213,496.1 212,496.4 211,496.0 210,495.9 209,496.0 208,495.2 207,495.5 206,496.3 205,496.2 204,496.0 203,496.4 202,496.4 201,496.0 200,496.6 199,496.6 198,496.0 197,495.8 196,496.4 195,497.0 194,496.6 193,496.6 192,497.1 191,496.8 190,496.3 189,496.0 188,495.9 187,496.0 186,495.8 185,495.6 184,496.1 183,496.2 182,496.7 181,496.6 180,496.0 179,496.3 178,496.6 177,496.9 176,497.0 175,497.5 174,497.8 173,497.8 172,498.1 171,498.0 170,497.7 169,497.8 168,498.4 167,498.0 166,497.5 165,497.7 164,497.7 163,498.1 162,498.4 161,497.7 160,498.1 159,498.3 158,497.8 157,497.9 156,498.0 155,498.2 154,498.1 153,498.0 152,498.2 151,497.9 150,497.7 149,497.9 148,497.8 147,498.0 146,498.1 145,498.2 144,498.4 143,498.0 142,497.8 141,498.1 140,498.0 139,497.5 138,497.6 137,498.4 136,498.6 135,498.1 134,497.9 133,498.0 132,498.3 131,497.9 130,497.6 129,498.2 128,498.1 127,497.8 126,498.2 125,498.3 124,498.2 123,498.1 122,497.9 121,498.3 120,498.1 119,498.0 118,498.1 117,497.5 116,497.6 115,497.7 114,497.5 113,497.8 112,497.6 111,497.0 110,497.5 109,498.0 108,497.9 107,497.0 106,496.9 105,497.4 104,497.3 103,497.6 102,497.6 101,497.6 100,497.3 99,497.1 98,497.7 97,497.7 96,497.2 95,496.8 94,497.3 93,497.5 92,497.5 91,497.2 90,496.3 89,496.5 88,497.4 87,497.9 86,497.2 85,497.0 84,497.1 83,497.2 82,497.2 81,496.8 80,497.1 79,497.1 78,496.7 77,496.2 76,496.6 75,497.5 74,497.1 73,496.9 72,497.0 71,496.7 70,497.3 69,497.2 68,497.1 67,497.5 66,496.9 65,497.0 64,497.0 63,497.3 62,497.4 61,497.0 60,497.1 59,497.2 58,497.3 57,497.2 56,497.2 55,497.3 54,497.3 53,496.8 52,496.9 51,497.0 50,497.0 49,496.9 48,496.6 47,497.0 46,496.9 45,496.6 44,497.0 43,496.8 42,496.4 41,496.6 40,496.7 39,496.3 38,496.1 37,496.6 36,496.8 35,496.3 34,496.3 33,496.5 32,496.6 31,496.6 30,496.3 29,496.5 28,496.7 27,496.6 26,496.7 25,496.6 24,496.1 23,496.3 22,496.4 21,496.4 20,496.4 19,496.6 18,496.5 17,496.3 16,495.7 15,495.2 14,495.9 13,496.4 12,495.9 11,496.2 10,496.8 9,496.4 8,496.4 7,496.4 6,496.4 5,496.5 4,496.3 3,496.1 2,496.1 1,496.0 0,496.0"/>
<polygon fill="#8C592B" points="0,449.4 1,449.1 2,448.9 3,449.0 4,448.8 5,449.3 6,449.0 7,449.6 8,449.7 9,449.3 10,449.5 11,448.4 12,449.0 13,449.6 14,449.3 15,449.2 16,449.0 17,449.3 18,449.3 19,449.1 20,449.9 21,449.2 22,448.4 23,448.7 24,448.6 25,448.3 26,448.5 27,449.3 28,449.3 29,448.5 30,448.9 31,450.0 32,449.7 33,448.9 34,448.4 35,449.9 36,451.1 37,450.4 38,449.1 39,449.5 40,450.0 41,451.3 42,451.9 43,452.3 44,453.6 45,454.7 46,455.5 47,456.2 48,455.0 49,452.7 50,451.8 51,451.0 52,448.4 53,448.2 54,449.3 55,449.4 56,450.4 57,450.0 58,449.0 59,448.4 60,447.7 61,448.3 62,449.0 63,449.1 64,449.5 65,450.0 66,450.2 67,449.7 68,449.5 69,449.2 70,449.1 71,449.7 72,449.3 73,447.4 74,447.4 75,450.3 76,450.5 77,448.9 78,449.0 79,449.9 80,450.0 81,449.4 82,448.6 83,448.5 84,448.6 85,448.9 86,450.2 87,450.6 88,449.5 89,448.5 90,448.1 91,448.8 92,449.8 93,450.0 94,449.9 95,448.9 96,447.7 97,448.9 98,449.4 99,449.8 100,449.2 101,447.7 102,448.3 103,449.0 104,449.8 105,449.3 106,449.3 107,448.9 108,448.4 109,448.4 110,448.4 111,448.7 112,449.1 113,451.2 114,450.3 115,448.5 116,449.5 117,449.7 118,450.0 119,449.5 120,449.2 121,449.3 122,449.3 123,449.8 124,449.5 125,449.1 126,448.1 127,447.8 128,449.1 129,449.5 130,449.5 131,449.0 132,448.9 133,450.1 134,448.7 135,448.3 136,450.4 137,449.9 138,449.4 139,449.8 140,449.7 141,449.5 142,448.7 143,448.7 144,448.9 145,448.9 146,448.8 147,449.8 148,450.1 149,449.1 150,449.0 151,450.0 152,449.5 153,449.7 154,451.3 155,451.8 156,451.4 157,450.5 158,450.9 159,451.5 160,452.2 161,452.3 162,451.6 163,451.0 164,451.3 165,452.1 166,453.0 167,453.1 168,453.3 169,454.0 170,453.1 171,451.6 172,451.3 173,451.4 174,450.9 175,451.0 176,451.4 177,451.3 178,450.8 179,449.6 180,449.3 181,449.2 182,449.1 183,449.3 184,450.0 185,449.1 186,449.1 187,451.0 188,450.6 189,450.5 190,450.7 191,451.3 192,452.2 193,451.6 194,451.7 195,451.5 196,451.0 197,451.7 198,451.0 199,451.0 200,451.4 201,451.8 202,451.8 203,450.6 204,450.5 205,451.5 206,452.5 207,452.3 208,451.4 209,451.3 210,451.1 211,450.2 212,450.7 213,450.4 214,448.6 215,448.7 216,449.7 217,449.1 218,449.8 219,449.6 220,449.3 221,449.7 222,450.7 223,449.7 224,448.5 225,449.6 226,450.0 227,449.6 228,448.8 229,449.7 230,449.8 231,449.2 232,449.4 233,449.5 234,448.8 235,448.4 236,449.0 237,449.3 238,449.9 239,450.1 240,449.8 241,449.6 242,449.9 243,449.6 244,448.9 245,448.5 246,448.0 247,449.2 248,449.7 249,448.3 250,448.3 251,449.2 252,448.6 253,448.9 254,449.3 255,449.2 256,449.8 257,449.5 258,449.5 259,449.7 260,449.0 261,449.8 262,450.1 263,449.3 264,449.0 265,449.3 266,448.7 267,448.9 268,449.6 269,448.6 270,448.2 271,449.3 272,449.1 273,449.7 274,449.8 275,448.9 276,448.1 277,448.0 278,449.0 279,449.3 280,449.6 281,449.2 282,450.2 283,450.7 284,449.3 285,449.1 286,448.0 287,447.5 288,449.6 289,449.6 290,449.0 291,448.6 292,448.9 293,449.5 294,449.0 295,449.4 296,450.1 297,450.0 298,448.3 299,448.0 300,449.0 301,448.2 302,447.2 303,447.5 304,448.1 305,448.2 306,447.9 307,448.0 308,448.5 309,448.2 310,448.2 311,448.0 312,447.0 313,447.0 314,448.0 315,449.1 316,447.3 317,445.4 318,445.8 319,445.9 320,445.7 321,445.3 322,446.0 323,445.3 324,444.5 325,445.5 326,445.7 327,444.2 328,444.8 329,445.4 330,444.6 331,444.8 332,444.5 333,444.4 334,445.1 335,445.1 336,444.2 337,444.4 338,445.1 339,444.5 340,445.0 341,445.7 342,446.5 343,448.5 344,449.1 345,449.6 346,450.1 347,450.4 348,450.5 349,451.6 350,453.2 351,451.9 352,452.1 353,453.9 354,453.8 355,453.4 356,452.9 357,451.6 358,451.6 359,451.7 360,450.9 361,451.1 362,451.3 363,450.0 364,449.5 365,449.3 366,449.0 367,449.4 368,448.3 369,446.4 370,447.0 371,448.7 372,447.6 373,445.8 374,445.5 375,445.8 376,446.4 377,446.2 378,446.5 379,446.1 380,445.3 381,445.0 382,445.9 383,447.0 384,446.9 385,445.8 386,445.7 387,446.2 388,445.8 389,445.9 390,445.3 391,444.8 392,444.1 393,443.9 394,444.4 395,444.0 396,444.1 397,445.2 398,444.9 399,444.5 400,445.1 401,446.5 402,448.6 403,449.4 404,449.3 405,449.4 406,449.8 407,450.3 408,449.4 409,448.6 410,447.9 411,447.8 412,448.3 413,447.7 414,447.0 415,446.6 416,445.8 417,445.1 418,445.0 419,445.2 420,445.1 421,445.3 422,445.5 423,445.4 424,445.2 425,444.1 426,443.5 427,442.6 428,443.1 429,443.4 430,442.1 431,443.0 432,442.5 432,496.1 431,496.2 430,496.1 429,496.0 428,496.4 427,496.5 426,496.1 425,495.8 424,496.2 423,496.5 422,496.0 421,496.3 420,496.4 419,495.9 418,496.1 417,496.7 416,496.7 415,496.6 414,496.2 413,495.8 412,496.4 411,496.3 410,496.6 409,496.2 408,495.3 407,496.1 406,496.6 405,496.4 404,496.0 403,495.7 402,496.0 401,496.6 400,496.4 399,496.3 398,496.5 397,496.1 396,495.5 395,495.2 394,495.3 393,495.6 392,495.8 391,496.0 390,496.7 389,496.3 388,495.8 387,496.2 386,496.3 385,495.8 384,495.8 383,496.1 382,496.0 381,496.4 380,496.3 379,495.8 378,496.2 377,496.5 376,496.6 375,496.8 374,497.2 373,497.2 372,497.2 371,497.7 370,498.0 369,498.5 368,499.0 367,498.9 366,498.3 365,498.3 364,499.0 363,498.5 362,498.7 361,498.5 360,497.9 359,498.5 358,499.0 357,498.7 356,498.8 355,499.5 354,499.1 353,498.7 352,498.7 351,498.0 350,497.8 349,498.0 348,498.2 347,498.1 346,497.8 345,497.1 344,496.2 343,496.8 342,497.4 341,496.6 340,496.2 339,496.1 338,495.8 337,496.0 336,496.2 335,496.3 334,496.4 333,495.7 332,495.7 331,496.2 330,496.2 329,496.3 328,496.5 327,496.5 326,496.0 325,495.8 324,495.7 323,495.7 322,496.1 321,496.2 320,495.8 319,495.9 318,496.3 317,496.4 316,496.1 315,496.3 314,496.4 313,496.2 312,496.2 311,495.2 310,495.2 309,496.4 308,497.0 307,496.9 306,496.0 305,495.6 304,496.2 303,496.3 302,496.2 301,496.7 300,496.8 299,496.4 298,496.3 297,496.3 296,496.1 295,496.2 294,496.8 293,497.0 292,496.3 291,495.8 290,496.0 289,495.8 288,495.9 287,496.2 286,496.3 285,496.7 284,496.4 283,496.2 282,496.2 281,496.5 280,496.6 279,496.3 278,495.8 277,496.1 276,496.5 275,496.1 274,495.7 273,496.1 272,496.0 271,495.2 270,495.4 269,496.4 268,496.5 267,496.0 266,496.6 265,497.1 264,496.9 263,496.5 262,496.7 261,496.7 260,496.2 259,496.1 258,495.9 257,495.9 256,496.5 255,496.6 254,496.6 253,496.8 252,496.6 251,496.7 250,496.7 249,496.0 248,495.6 247,496.1 246,496.3 245,496.0 244,495.9 243,496.1 242,496.0 241,496.0 240,496.5 239,496.5 238,496.2 237,496.5 236,496.2 235,496.0 234,495.7 233,495.7 232,496.2 231,495.9 230,495.8 229,496.2 228,496.4 227,496.6 226,496.2 225,496.0 224,495.9 223,495.5 222,495.6 221,496.0 220,496.4 219,496.5 218,495.9 217,495.7 216,495.5 215,495.7 214,496.2 213,496.1 212,496.4 211,496.0 210,495.9 209,496.0 208,495.2 207,495.5 206,496.3 205,496.2 204,496.0 203,496.4 202,496.4 201,496.0 200,496.6 199,496.6 198,496.0 197,495.8 196,496.4 195,497.0 194,496.6 193,496.6 192,497.1 191,496.8 190,496.3 189,496.0 188,495.9 187,496.0 186,495.8 185,495.6 184,496.1 183,496.2 182,496.7 181,496.6 180,496.0 179,496.3 178,496.6 177,496.9 176,497.0 175,497.5 174,497.8 173,497.8 172,498.1 171,498.0 170,497.7 169,497.8 168,498.4 167,498.0 166,497.5 165,497.7 164,497.7 163,498.1 162,498.4 161,497.7 160,498.1 159,498.3 158,497.8 157,497.9 156,498.0 155,498.2 154,498.1 153,498.0 152,498.2 151,497.9 150,497.7 149,497.9 148,497.8 147,498.0 146,498.1 145,498.2 144,498.4 143,498.0 142,497.8 141,498.1 140,498.0 139,497.5 138,497.6 137,498.4 136,498.6 135,498.1 134,497.9 133,498.0 132,498.3 131,497.9 130,497.6 129,498.2 128,498.1 127,497.8 126,498.2 125,498.3 124,498.2 123,498.1 122,497.9 121,498.3 120,498.1 119,498.0 118,498.1 117,497.5 116,497.6 115,497.7 114,497.5 113,497.8 112,497.6 111,497.0 110,497.5 109,498.0 108,497.9 107,497.0 106,496.9 105,497.4 104,497.3 103,497.6 102,497.6 101,497.6 100,497.3 99,497.1 98,497.7 97,497.7 96,497.2 95,496.8 94,497.3 93,497.5 92,497.5 91,497.2 90,496.3 89,496.5 88,497.4 87,497.9 86,497.2 85,497.0 84,497.1 83,497.2 82,497.2 81,496.8 80,497.1 79,497.1 78,496.7 77,496.2 76,496.6 75,497.5 74,497.1 73,496.9 72,497.0 71,496.7 70,497.3 69,497.2 68,497.1 67,497.5 66,496.9 65,497.0 64,497.0 63,497.3 62,497.4 61,497.0 60,497.1 59,497.2 58,497.3 57,497.2 56,497.2 55,497.3 54,497.3 53,496.8 52,496.9 51,497.0 50,497.0 49,496.9 48,496.6 47,497.0 46,496.9 45,496.6 44,497.0 43,496.8 42,496.4 41,496.6 40,496.7 39,496.3 38,496.1 37,496.6 36,496.8 35,496.3 34,496.3 33,496.5 32,496.6 31,496.6 30,496.3 29,496.5 28,496.7 27,496.6 26,496.7 25,496.6 24,496.1 23,496.3 22,496.4 21,496.4 20,496.4 19,496.6 18,496.5 17,496.3 16,495.7 15,495.2 14,495.9 13,496.4 12,495.9 11,496.2 10,496.8 9,496.4 8,496.4 7,496.4 6,496.4 5,496.5 4,496.3 3,496.1 2,496.1 1,496.0 0,496.0"/>
<polygon fill="#7D6550" points="0,495.5 1,495.5 2,495.6 3,495.6 4,495.8 5,496.0 6,495.9 7,495.9 8,495.9 9,495.9 10,496.3 11,495.7 12,495.4 13,495.9 14,495.4 15,494.7 16,495.2 17,495.8 18,496.0 19,496.1 20,495.9 21,495.9 22,495.9 23,495.8 24,495.6 25,496.1 26,496.2 27,496.1 28,496.2 29,496.0 30,495.8 31,496.1 32,496.1 33,496.0 34,495.8 35,495.8 36,496.3 37,496.1 38,495.6 39,495.8 40,496.2 41,496.1 42,495.9 43,496.3 44,496.5 45,496.1 46,496.4 47,496.5 48,496.1 49,496.4 50,496.5 51,496.5 52,496.4 53,496.3 54,496.8 55,496.8 56,496.7 57,496.7 58,496.8 59,496.7 60,496.6 61,496.5 62,496.9 63,496.8 64,496.5 65,496.5 66,496.4 67,497.0 68,496.6 69,496.7 70,496.8 71,496.2 72,496.5 73,496.4 74,496.6 75,497.0 76,496.1 77,495.7 78,496.2 79,496.6 80,496.6 81,496.3 82,496.7 83,496.7 84,496.6 85,496.5 86,496.7 87,497.4 88,496.9 89,496.0 90,495.8 91,496.7 92,497.0 93,497.0 94,496.8 95,496.3 96,496.7 97,497.2 98,497.2 99,496.6 100,496.8 101,497.1 102,497.1 103,497.1 104,496.8 105,496.9 106,496.4 107,496.5 108,497.4 109,497.5 110,497.0 111,496.5 112,497.1 113,497.3 114,497.0 115,497.2 116,497.1 117,497.0 118,497.6 119,497.5 120,497.6 121,497.8 122,497.4 123,497.6 124,497.7 125,497.8 126,497.7 127,497.3 128,497.6 129,497.7 130,497.1 131,497.4 132,497.8 133,497.5 134,497.4 135,497.6 136,498.1 137,497.9 138,497.1 139,497.0 140,497.5 141,497.6 142,497.3 143,497.5 144,497.9 145,497.7 146,497.6 147,497.5 148,497.3 149,497.4 150,497.2 151,497.4 152,497.7 153,497.5 154,497.6 155,497.7 156,497.5 157,497.4 158,497.3 159,497.8 160,497.6 161,497.2 162,497.9 163,497.6 164,497.2 165,497.2 166,497.0 167,497.5 168,497.9 169,497.3 170,497.2 171,497.5 172,497.6 173,497.3 174,497.3 175,497.0 176,496.5 177,496.4 178,496.1 179,495.8 180,495.5 181,496.1 182,496.2 183,495.7 184,495.6 185,495.1 186,495.3 187,495.5 188,495.4 189,495.5 190,495.8 191,496.3 192,496.6 193,496.1 194,496.1 195,496.5 196,495.9 197,495.3 198,495.5 199,496.1 200,496.1 201,495.5 202,495.9 203,495.9 204,495.5 205,495.7 206,495.8 207,495.0 208,494.7 209,495.5 210,495.4 211,495.5 212,495.9 213,495.6 214,495.7 215,495.2 216,495.0 217,495.2 218,495.4 219,496.0 220,495.9 221,495.5 222,495.1 223,495.0 224,495.4 225,495.5 226,495.7 227,496.1 228,495.9 229,495.7 230,495.3 231,495.4 232,495.7 233,495.2 234,495.2 235,495.5 236,495.7 237,496.0 238,495.7 239,496.0 240,496.0 241,495.5 242,495.5 243,495.6 244,495.4 245,495.5 246,495.8 247,495.6 248,495.1 249,495.5 250,496.2 251,496.2 252,496.1 253,496.3 254,496.1 255,496.1 256,496.0 257,495.4 258,495.4 259,495.6 260,495.7 261,496.2 262,496.2 263,496.0 264,496.4 265,496.6 266,496.1 267,495.5 268,496.0 269,495.9 270,494.9 271,494.7 272,495.5 273,495.6 274,495.2 275,495.6 276,496.0 277,495.6 278,495.3 279,495.8 280,496.1 281,496.0 282,495.7 283,495.7 284,495.9 285,496.2 286,495.8 287,495.7 288,495.4 289,495.3 290,495.5 291,495.3 292,495.8 293,496.5 294,496.3 295,495.7 296,495.6 297,495.8 298,495.8 299,495.9 300,496.3 301,496.2 302,495.7 303,495.8 304,495.7 305,495.1 306,495.5 307,496.4 308,496.5 309,495.9 310,494.7 311,494.7 312,495.7 313,495.7 314,495.9 315,495.8 316,495.6 317,495.9 318,495.8 319,495.4 320,495.3 321,495.7 322,495.6 323,495.2 324,495.2 325,495.3 326,495.5 327,496.0 328,496.0 329,495.8 330,495.7 331,495.7 332,495.2 333,495.2 334,495.9 335,495.8 336,495.7 337,495.5 338,495.3 339,495.6 340,495.7 341,496.1 342,496.9 343,496.3 344,495.7 345,496.6 346,497.3 347,497.6 348,497.7 349,497.5 350,497.3 351,497.5 352,498.2 353,498.2 354,498.6 355,499.0 356,498.3 357,498.2 358,498.5 359,498.0 360,497.4 361,498.0 362,498.2 363,498.0 364,498.5 365,497.8 366,497.8 367,498.4 368,498.5 369,498.0 370,497.5 371,497.2 372,496.7 373,496.7 374,496.7 375,496.3 376,496.1 377,496.0 378,495.7 379,495.3 380,495.8 381,495.9 382,495.5 383,495.6 384,495.3 385,495.3 386,495.8 387,495.7 388,495.3 389,495.8 390,496.2 391,495.5 392,495.3 393,495.1 394,494.8 395,494.7 396,495.0 397,495.6 398,496.0 399,495.8 400,495.9 401,496.1 402,495.5 403,495.2 404,495.5 405,495.9 406,496.1 407,495.6 408,494.8 409,495.7 410,496.1 411,495.8 412,495.9 413,495.3 414,495.7 415,496.1 416,496.2 417,496.2 418,495.6 419,495.4 420,495.9 421,495.8 422,495.5 423,496.0 424,495.7 425,495.3 426,495.6 427,496.0 428,495.9 429,495.5 430,495.6 431,495.7 432,495.6 432,498.4 431,498.2 430,498.8 429,498.3 428,498.7 427,498.9 426,498.4 425,498.4 424,498.6 423,498.7 422,498.2 421,498.5 420,498.5 419,497.8 418,497.9 417,498.8 416,498.9 415,498.6 414,498.3 413,497.7 412,498.5 411,498.9 410,498.5 409,498.0 408,497.6 407,498.0 406,498.5 405,498.8 404,498.0 403,498.0 402,498.2 401,498.6 400,498.5 399,498.9 398,499.0 397,498.3 396,497.9 395,497.9 394,497.2 393,497.8 392,498.0 391,497.8 390,498.8 389,498.8 388,498.2 387,498.2 386,498.4 385,498.0 384,497.7 383,498.0 382,498.2 381,498.6 380,498.6 379,498.2 378,498.4 377,498.9 376,498.5 375,499.0 374,499.6 373,499.7 372,499.1 371,500.0 370,500.0 369,500.5 368,501.3 367,500.7 366,500.2 365,500.4 364,500.8 363,500.4 362,501.3 361,501.7 360,500.8 359,501.0 358,501.5 357,501.6 356,501.8 355,501.8 354,501.1 353,501.1 352,500.6 351,500.2 350,500.0 349,500.8 348,500.3 347,500.8 346,499.7 345,499.1 344,498.6 343,499.4 342,499.7 341,498.4 340,498.4 339,498.6 338,498.6 337,498.2 336,498.8 335,498.3 334,498.5 333,497.5 332,497.6 331,498.6 330,498.3 329,498.3 328,498.9 327,498.8 326,498.5 325,497.9 324,497.6 323,497.9 322,498.3 321,498.1 320,498.1 319,498.4 318,498.5 317,498.4 316,498.2 315,498.8 314,499.1 313,498.6 312,498.4 311,497.6 310,497.2 309,498.4 308,499.0 307,498.8 306,498.6 305,498.1 304,498.4 303,498.1 302,498.2 301,498.6 300,499.2 299,498.5 298,498.8 297,498.5 296,498.6 295,498.0 294,499.0 293,498.8 292,498.3 291,498.1 290,498.3 289,498.9 288,498.6 287,498.4 286,498.2 285,498.6 284,498.3 283,498.0 282,498.0 281,498.7 280,499.0 279,498.2 278,497.7 277,498.4 276,499.2 275,498.2 274,497.7 273,497.9 272,498.1 271,497.7 270,499.0 269,499.2 268,498.3 267,498.1 266,498.8 265,499.2 264,499.1 263,498.8 262,499.1 261,498.8 260,498.6 259,498.0 258,498.4 257,497.9 256,499.1 255,498.6 254,498.7 253,499.0 252,498.5 251,498.6 250,498.6 249,499.0 248,498.3 247,497.9 246,499.1 245,498.8 244,497.9 243,498.1 242,498.1 241,498.0 240,498.5 239,499.0 238,498.6 237,498.8 236,498.6 235,498.2 234,498.1 233,498.6 232,498.3 231,498.0 230,497.7 229,498.0 228,498.5 227,498.7 226,498.5 225,497.8 224,498.8 223,498.1 222,498.2 221,498.2 220,498.3 219,498.7 218,498.1 217,497.7 216,498.3 215,498.5 214,498.3 213,499.3 212,499.4 211,498.5 210,498.2 209,498.8 208,497.5 207,497.5 206,498.6 205,498.2 204,498.3 203,498.5 202,498.7 201,498.2 200,498.8 199,498.5 198,498.5 197,497.8 196,499.2 195,499.2 194,499.1 193,498.4 192,499.2 191,499.4 190,498.6 189,498.1 188,498.0 187,498.2 186,498.8 185,498.3 184,498.3 183,500.0 182,499.9 181,498.7 180,498.2 179,498.3 178,499.2 177,499.4 176,499.1 175,499.6 174,499.9 173,499.7 172,500.0 171,500.1 170,499.5 169,500.0 168,500.3 167,500.0 166,499.4 165,500.3 164,499.7 163,500.6 162,500.3 161,499.8 160,500.2 159,500.6 158,500.3 157,499.8 156,500.3 155,500.9 154,499.9 153,499.9 152,501.0 151,500.5 150,499.5 149,499.9 148,500.0 147,500.2 146,500.5 145,500.6 144,500.3 143,500.4 142,499.8 141,500.3 140,500.1 139,499.5 138,499.7 137,500.6 136,501.0 135,500.5 134,500.2 133,500.3 132,500.8 131,500.6 130,499.7 129,500.7 128,500.3 127,500.1 126,500.1 125,500.5 124,500.6 123,500.0 122,500.2 121,500.3 120,499.9 119,500.5 118,500.8 117,499.5 116,499.5 115,499.5 114,499.4 113,500.5 112,500.2 111,499.7 110,500.2 109,500.1 108,499.9 107,498.8 106,499.4 105,499.6 104,499.1 103,499.9 102,500.6 101,500.1 100,499.6 99,499.7 98,500.0 97,499.5 96,499.3 95,499.2 94,499.4 93,499.6 92,500.0 91,499.2 90,498.6 89,498.5 88,499.5 87,499.8 86,499.0 85,498.9 84,499.1 83,499.4 82,499.3 81,498.7 80,499.1 79,499.0 78,499.1 77,498.5 76,498.7 75,499.9 74,499.1 73,499.3 72,499.1 71,498.7 70,499.4 69,499.4 68,499.8 67,500.1 66,498.9 65,499.4 64,498.8 63,499.5 62,500.0 61,499.2 60,499.1 59,500.0 58,499.1 57,499.0 56,499.6 55,499.1 54,499.1 53,498.6 52,498.8 51,499.0 50,499.6 49,499.1 48,499.3 47,500.1 46,498.9 45,499.3 44,499.3 43,499.1 42,498.8 41,499.4 40,499.2 39,499.2 38,499.5 37,499.1 36,498.7 35,498.9 34,499.2 33,498.5 32,499.0 31,499.4 30,499.5 29,499.0 28,498.6 27,498.4 26,498.7 25,498.6 24,498.2 23,498.7 22,499.0 21,499.4 20,498.9 19,498.9 18,499.0 17,498.2 16,498.0 15,497.4 14,497.8 13,498.7 12,498.3 11,498.2 10,499.0 9,498.7 8,498.3 7,498.4 6,498.3 5,498.6 4,498.2 3,498.7 2,498.1 1,497.9 0,498.0"/>
<g stroke="#888" stroke-opacity="0.12" stroke-width="1" stroke-dasharray="4 4" fill="none"><line x1="0" y1="94.5" x2="432" y2="94.5"/><line x1="0" y1="228.5" x2="432" y2="228.5"/></g></svg>

<div id="av">Av. <b>22,893 MW</b></div>
<div class="xl" style="left:2.5px;top:566.7px">Tue<br>30 Nov</div>
<div class="xl" style="left:151px;top:566.7px">Dec 21</div>
<div class="xl" style="left:300px;top:566.7px">Thu<br>2 Dec</div>
<div id="two">2</div>
<div id="topline"></div>
<div id="pill"><span>Default</span></div>
<div class="sep" style="top:67.30px"></div><div class="lh" style="top:67.30px">Sources</div><div class="sep" style="top:92.82px"></div><div class="sw" style="top:98.22px;background:#FFDD33"></div><div class="lt" style="top:92.82px">Solar (Rooftop)</div><div class="sep" style="top:118.34px"></div><div class="sw" style="top:123.74px;background:#FFD500"></div><div class="lt" style="top:118.34px">Solar (Utility)</div><div class="sep" style="top:143.86px"></div><div class="sw" style="top:149.26px;background:#417505"></div><div class="lt" style="top:143.86px">Wind</div><div class="sep" style="top:169.38px"></div><div class="sw" style="top:174.78px;background:#4A84B8"></div><div class="lt" style="top:169.38px">Hydro</div><div class="sep" style="top:194.90px"></div><div class="sw" style="top:200.30px;background:#00A2FA"></div><div class="lt" style="top:194.90px">Battery (Discharging)</div><div class="sep" style="top:220.42px"></div><div class="sw" style="top:225.82px;background:#B46813"></div><div class="lt" style="top:220.42px">Gas (Waste Coal Mine)</div><div class="sep" style="top:245.94px"></div><div class="sw" style="top:251.34px;background:#F9DCBC"></div><div class="lt" style="top:245.94px">Gas (Reciprocating)</div><div class="sep" style="top:271.46px"></div><div class="sw" style="top:276.86px;background:#FFCD96"></div><div class="lt" style="top:271.46px">Gas (OCGT)</div><div class="sep" style="top:296.98px"></div><div class="sw" style="top:302.38px;background:#FDB462"></div><div class="lt" style="top:296.98px">Gas (CCGT)</div><div class="sep" style="top:322.50px"></div><div class="sw" style="top:327.90px;background:#F48E1B"></div><div class="lt" style="top:322.50px">Gas (Steam)</div><div class="sep" style="top:348.02px"></div><div class="sw" style="top:353.42px;background:#F35020"></div><div class="lt" style="top:348.02px">Distillate</div><div class="sep" style="top:373.54px"></div><div class="sw" style="top:378.94px;background:#1D7A7A"></div><div class="lt" style="top:373.54px">Bioenergy (Biomass)</div><div class="sep" style="top:399.06px"></div><div class="sw" style="top:404.46px;background:#121212"></div><div class="lt" style="top:399.06px">Coal (Black)</div><div class="sep" style="top:424.58px"></div><div class="sw" style="top:429.98px;background:#8C592B"></div><div class="lt" style="top:424.58px">Coal (Brown)</div><div class="sep" style="top:450.10px"></div><div class="lh" style="top:450.10px">Loads</div><div class="sep" style="top:475.62px"></div><div class="sw" style="top:481.02px;background:#88AFD0"></div><div class="lt" style="top:475.62px">Pumps</div><div class="sep" style="top:501.14px"></div><div class="sw" style="top:506.54px;background:#B3DCF5"></div><div class="lt" style="top:501.14px">Battery (Charging)</div><div class="sep" style="top:526.66px"></div><div class="lh" style="top:526.66px">Net</div>
<div style="position:absolute;left:445px;top:551.6px;width:155px;height:1.5px;background:#222"></div>
<div style="position:absolute;left:449px;top:563.3px;width:16.5px;height:3px;background:#DCD9D6"></div>
<div style="position:absolute;left:471px;top:557.5px;font-size:13px;line-height:18px;font-weight:bold;color:#333;white-space:nowrap;transform:scaleY(1.1);transform-origin:0 13px">Renewables</div>
<div style="position:absolute;left:445px;top:577px;width:155px;height:2px;background:#555"></div>
</body></html>
